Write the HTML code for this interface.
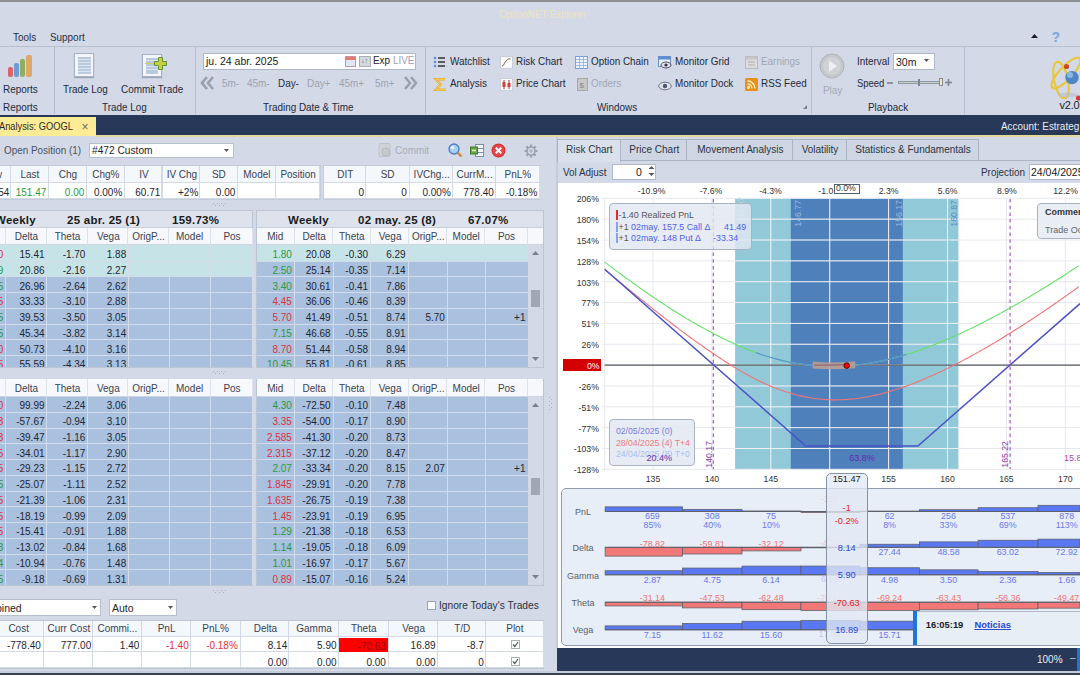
<!DOCTYPE html><html><head><meta charset="utf-8"><style>
*{margin:0;padding:0;box-sizing:border-box}
html,body{width:1080px;height:675px;overflow:hidden;background:#d3d9e7;font-family:"Liberation Sans",sans-serif;font-size:10px;color:#1e2a3a}
.a{position:absolute}
.t{position:absolute;white-space:nowrap;line-height:1}
.g{color:#9aa3b0}
svg{position:absolute;overflow:visible}
.u{font-size:11px;transform:scaleX(0.9);transform-origin:0 0}
.cc{font-size:10.8px;transform:scaleX(0.925);transform-origin:50% 0;text-align:center}
.cr{font-size:10.8px;transform:scaleX(0.925);transform-origin:100% 0;text-align:right}
</style></head><body>
<div class="a" style="left:0px;top:0px;width:1080px;height:1.6px;background:#8e9096"></div>
<div class="a" style="left:0px;top:2px;width:1080px;height:44px;background:#d3d9e7"></div>
<div class="t" style="left:499px;top:8.6px;color:#f0e4bc;font-size:11px;transform:scaleX(0.885);transform-origin:0 0">OptionNET Explorer</div>
<div class="t u" style="left:13px;top:31.6px;color:#27303d">Tools</div>
<div class="t u" style="left:50px;top:31.6px;color:#27303d">Support</div>
<svg style="left:1031px;top:34px" width="8" height="5"><path d="M0 4 L3.5 0 L7 4Z" fill="#1a1f2a"/></svg>
<div class="t" style="left:1051.5px;top:30px;color:#78a8e0;font-weight:bold;font-size:14px">?</div>
<div class="a" style="left:0px;top:45.6px;width:1080px;height:1.7px;background:#b6c0d0"></div>
<div class="a" style="left:54px;top:47px;width:1.3px;height:67px;background:#b3bdd0"></div>
<div class="a" style="left:195px;top:47px;width:1.3px;height:67px;background:#b3bdd0"></div>
<div class="a" style="left:425px;top:47px;width:1.3px;height:67px;background:#b3bdd0"></div>
<div class="a" style="left:811px;top:47px;width:1.3px;height:67px;background:#b3bdd0"></div>
<div class="a" style="left:964px;top:47px;width:1.3px;height:67px;background:#b3bdd0"></div>
<div class="a" style="left:8px;top:67px;width:5px;height:10px;background:#d9646a;border-radius:2px"></div>
<div class="a" style="left:14px;top:63px;width:5px;height:14px;background:#6c9bd6;border-radius:2px"></div>
<div class="a" style="left:20px;top:59px;width:5px;height:18px;background:#8fad64;border-radius:2px"></div>
<div class="a" style="left:26px;top:55px;width:6px;height:22px;background:#e0a862;border-radius:2px"></div>
<div class="t u" style="left:3px;top:83.9px;">Reports</div>
<div class="t u" style="left:3px;top:101.6px;">Reports</div>
<div class="a" style="left:74px;top:53px;width:20px;height:24px;background:#f4f6fa;border:1px solid #a7b4c8;box-shadow:0 1px 1px #9aa6b8"></div>
<div class="a" style="left:78px;top:57px;width:13px;height:17px;background:#b9c9de"></div>
<div class="a" style="left:78px;top:59px;width:13px;height:1px;background:#dde5f0"></div>
<div class="a" style="left:78px;top:62px;width:13px;height:1px;background:#dde5f0"></div>
<div class="a" style="left:78px;top:65px;width:13px;height:1px;background:#dde5f0"></div>
<div class="a" style="left:78px;top:68px;width:13px;height:1px;background:#dde5f0"></div>
<div class="a" style="left:78px;top:71px;width:13px;height:1px;background:#dde5f0"></div>
<div class="a" style="left:142px;top:54px;width:20px;height:23px;background:#f4f6fa;border:1px solid #a7b4c8;box-shadow:0 1px 1px #9aa6b8"></div>
<div class="a" style="left:146px;top:58px;width:12px;height:16px;background:#b9c9de"></div>
<div class="a" style="left:146px;top:60px;width:12px;height:1px;background:#dde5f0"></div>
<div class="a" style="left:146px;top:63px;width:12px;height:1px;background:#dde5f0"></div>
<div class="a" style="left:146px;top:66px;width:12px;height:1px;background:#dde5f0"></div>
<div class="a" style="left:146px;top:69px;width:12px;height:1px;background:#dde5f0"></div>
<div class="a" style="left:145px;top:62.5px;width:12px;height:1.5px;background:#d8c85a"></div>
<svg style="left:154px;top:57px" width="13" height="13"><path d="M4.5 0.5H8.5V4.5H12.5V8.5H8.5V12.5H4.5V8.5H0.5V4.5H4.5Z" fill="#c8d040" stroke="#5a8a30" stroke-width="0.9"/></svg>
<div class="t u" style="left:63px;top:83.9px;">Trade Log</div>
<div class="t u" style="left:121px;top:83.9px;">Commit Trade</div>
<div class="t u" style="left:102px;top:101.6px;">Trade Log</div>
<div class="a" style="left:203px;top:53px;width:213px;height:17px;background:#fff;border:1px solid #aeb8c8"></div>
<div class="t" style="left:206px;top:55.8px;font-size:10.5px;color:#1a1a1a">ju. 24 abr. 2025</div>
<div class="a" style="left:345px;top:56px;width:11px;height:11px;background:linear-gradient(#e87a6a 0 3px,#dfe6f5 3px);border:1px solid #b9a"></div>
<div class="a" style="left:359px;top:56px;width:12px;height:11px;background:#d5d8de;border:1px solid #a9afb9"></div>
<div class="t" style="left:361px;top:57px;font-size:7px;color:#667">&#8595;&#8593;</div>
<div class="t u" style="left:373px;top:54.6px;color:#222">Exp</div>
<div class="t u" style="left:393px;top:54.6px;color:#a39ab8">LIVE</div>
<svg style="left:200px;top:76px" width="16" height="14"><path d="M7 1 L2 7 L7 13 M13 1 L8 7 L13 13" stroke="#9aa1ad" stroke-width="2.6" fill="none"/></svg>
<div class="t u" style="left:222px;top:77.6px;color:#9ba4b1">5m-</div>
<div class="t u" style="left:247px;top:77.6px;color:#9ba4b1">45m-</div>
<div class="t u" style="left:278px;top:77.6px;color:#27303d">Day-</div>
<div class="t u" style="left:307px;top:77.6px;color:#9ba4b1">Day+</div>
<div class="t u" style="left:339px;top:77.6px;color:#9ba4b1">45m+</div>
<div class="t u" style="left:375px;top:77.6px;color:#9ba4b1">5m+</div>
<svg style="left:403px;top:76px" width="16" height="14"><path d="M2 1 L7 7 L2 13 M8 1 L13 7 L8 13" stroke="#9aa1ad" stroke-width="2.6" fill="none"/></svg>
<div class="t u" style="left:263px;top:101.6px;">Trading Date &amp; Time</div>
<svg style="left:433px;top:56px" width="13" height="12"><g fill="#5b8ed6"><circle cx="2" cy="2" r="1.3"/><circle cx="2" cy="6" r="1.3"/><circle cx="2" cy="10" r="1.3"/></g><g stroke="#333" stroke-width="1.4"><path d="M5 2H12M5 6H12M5 10H12"/></g></svg>
<div class="t u" style="left:450px;top:56.1px;">Watchlist</div>
<svg style="left:500px;top:56px" width="13" height="13"><rect x="0.5" y="0.5" width="12" height="12" fill="#f8f9fb" stroke="#c9ced8"/><path d="M2 10 C4 10 4.5 6 6 5 S8 2 10.5 3" stroke="#8a6a3a" fill="none"/></svg>
<div class="t u" style="left:516px;top:56.1px;">Risk Chart</div>
<svg style="left:575px;top:56px" width="13" height="13"><rect x="0.5" y="0.5" width="12" height="12" fill="#eef3fb" stroke="#7aa0d8"/><path d="M0.5 3.5H12.5M0.5 6.5H12.5M0.5 9.5H12.5M4.5 0.5V12.5M8.5 0.5V12.5" stroke="#8ab0e0" stroke-width="0.8"/></svg>
<div class="t u" style="left:591px;top:56.1px;">Option Chain</div>
<svg style="left:658px;top:56px" width="14" height="13"><rect x="0.5" y="0.5" width="12" height="10" fill="#e8eef8" stroke="#6a90c8"/><rect x="0.5" y="0.5" width="12" height="3" fill="#5b8ed6"/><ellipse cx="8" cy="9" rx="5" ry="3" fill="#dde" stroke="#556"/><circle cx="8" cy="9" r="1.6" fill="#334"/></svg>
<div class="t u" style="left:675px;top:56.1px;">Monitor Grid</div>
<svg style="left:745px;top:56px" width="13" height="13"><rect x="0.5" y="0.5" width="12" height="12" fill="#dcdcdc" stroke="#b9b9b9"/><rect x="0.5" y="0.5" width="12" height="3" fill="#c5c5c5"/><path d="M3 6H10M3 9H10" stroke="#b0b0b0"/></svg>
<div class="t u" style="left:761px;top:56.1px;color:#a0a8b4">Earnings</div>
<svg style="left:434px;top:78px" width="13" height="13"><path d="M11 1.2H1.8L6.5 6.5L1.8 11.8H11.5" stroke="#e8a830" stroke-width="2.4" fill="none"/><path d="M11 1.2H1.8L6.5 6.5L1.8 11.8H11.5" stroke="#f8d860" stroke-width="1" fill="none"/></svg>
<div class="t u" style="left:450px;top:78.1px;">Analysis</div>
<svg style="left:500px;top:78px" width="13" height="13"><rect x="0.5" y="0.5" width="12" height="12" fill="#f8f9fb" stroke="#c9ced8"/><path d="M4 2V11M9 2V11" stroke="#c03030"/><rect x="2.5" y="4" width="3" height="5" fill="#d04040"/><rect x="7.5" y="5" width="3" height="4" fill="#d04040"/></svg>
<div class="t u" style="left:516px;top:78.1px;">Price Chart</div>
<svg style="left:576px;top:78px" width="13" height="13"><rect x="1.5" y="0.5" width="10" height="12" fill="#c8c8c8" stroke="#a8a8a8"/><text x="3.5" y="10" font-size="8" fill="#888">$</text></svg>
<div class="t u" style="left:591px;top:78.1px;color:#a0a8b4">Orders</div>
<svg style="left:658px;top:81px" width="14" height="10"><ellipse cx="7" cy="5" rx="6.3" ry="3.8" fill="#e0e4ea" stroke="#6a707c"/><circle cx="7" cy="5" r="2.2" fill="#4a5a74"/></svg>
<div class="t u" style="left:675px;top:78.1px;">Monitor Dock</div>
<svg style="left:745px;top:78px" width="13" height="13"><rect x="0" y="0" width="13" height="13" rx="1.5" fill="#e8901c"/><circle cx="3.5" cy="9.5" r="1.4" fill="#fff3c0"/><path d="M2.5 6A4.5 4.5 0 0 1 7 10.5M2.5 3A7.5 7.5 0 0 1 10 10.5" stroke="#fff3c0" stroke-width="1.3" fill="none"/></svg>
<div class="t u" style="left:761px;top:78.1px;">RSS Feed</div>
<div class="t u" style="left:597px;top:101.6px;">Windows</div>
<svg style="left:803px;top:105px" width="5" height="5"><path d="M4 0V4H0Z" fill="#7a8290"/></svg>
<svg style="left:819px;top:53px" width="26" height="26"><circle cx="13" cy="13" r="12" fill="#c4c7cc" stroke="#b0b3b8"/><circle cx="13" cy="13" r="9" fill="#cfd2d6"/><path d="M10 7.5L18 13L10 18.5Z" fill="#eef0f2"/></svg>
<div class="t u" style="left:823px;top:84.6px;color:#a3aab5">Play</div>
<div class="t u" style="left:857px;top:56.1px;">Interval</div>
<div class="a" style="left:893px;top:53px;width:42px;height:17px;background:#fff;border:1px solid #aeb8c8"></div>
<div class="t" style="left:896px;top:56.7px;font-size:10.5px;color:#1a1a1a">30m</div>
<svg style="left:924px;top:59px" width="6" height="4"><path d="M0 0H5L2.5 3Z" fill="#555"/></svg>
<div class="t" style="left:857px;top:78.1px;font-size:11px;transform:scaleX(0.86);transform-origin:0 0">Speed</div>
<div class="a" style="left:887px;top:82px;width:6px;height:2px;background:#8a96a6"></div>
<div class="a" style="left:898px;top:81px;width:45px;height:3px;background:#c8d2c0;border:1px solid #8c9aa8"></div>
<div class="a" style="left:918px;top:79px;width:2px;height:7px;background:#7a8694"></div>
<div class="a" style="left:939px;top:78px;width:4px;height:8px;background:#f2e6cc;border:1px solid #8a8a8a"></div>
<svg style="left:945px;top:79px" width="7" height="7"><path d="M3.5 0V7M0 3.5H7" stroke="#7a8694" stroke-width="1.6"/></svg>
<div class="t u" style="left:868px;top:101.6px;">Playback</div>
<svg style="left:1040px;top:50px" width="40" height="60"><g fill="none" stroke="#e8c640" stroke-width="2.2"><ellipse cx="21" cy="30" rx="7" ry="18.5" transform="rotate(-12 21 30)"/><ellipse cx="26" cy="23" rx="6.5" ry="20" transform="rotate(43 26 23)"/></g><ellipse cx="28" cy="45" rx="10" ry="2.5" fill="#b8c0cc" opacity="0.6"/><circle cx="32" cy="27.6" r="6.7" fill="#4f86c6"/><circle cx="30" cy="25" r="3" fill="#8ab8e8"/><circle cx="26.5" cy="16.5" r="2.6" fill="#c84a28"/><circle cx="38.5" cy="48" r="2.6" fill="#e03838"/></svg>
<div class="t" style="left:1059.5px;top:99.5px;color:#1a1e28;font-size:11px;letter-spacing:-0.2px">v2.0</div>
<div class="a" style="left:0px;top:115px;width:1080px;height:20px;background:#283858"></div>
<div class="a" style="left:0px;top:117px;width:96px;height:19px;background:#fdeb95"></div>
<div class="t" style="left:-1.5px;top:121.3px;color:#2a2a2a;font-size:11.2px;transform:scaleX(0.83);transform-origin:0 0">Analysis: GOOGL</div>
<div class="t" style="left:81.5px;top:121px;color:#6a6a6a;font-size:12px">&#215;</div>
<div class="t u" style="left:1001px;top:120.6px;color:#e8ecf4">Account: Estrateg</div>
<div class="a" style="left:96px;top:135px;width:984px;height:2px;background:#e2d89a"></div>
<div class="t u" style="left:4px;top:144.6px;color:#4a5262">Open Position (1)</div>
<div class="a" style="left:89px;top:143px;width:145px;height:15px;background:#fff;border:1px solid #b5bfcd"></div>
<div class="t" style="left:92px;top:146px;color:#1e1e1e;font-size:10.2px">#472 Custom</div>
<svg style="left:224px;top:149px" width="6" height="4"><path d="M0 0H5L2.5 3Z" fill="#555"/></svg>
<svg style="left:378px;top:143px" width="14" height="14"><rect x="1" y="0.5" width="11" height="13" rx="1" fill="#cfd3d8" stroke="#c0c4ca"/><circle cx="8" cy="9" r="4" fill="#c6cacf" stroke="#b5b9bf"/></svg>
<div class="t u" style="left:395px;top:144.6px;color:#a6aebb">Commit</div>
<svg style="left:448px;top:143px" width="15" height="15"><circle cx="6" cy="6" r="5" fill="#a9cdf0" stroke="#4a7cc0" stroke-width="1.3"/><circle cx="4.5" cy="4.5" r="1.8" fill="#e6f2fc"/><path d="M9.5 9.5L13.5 13.5" stroke="#c88a3a" stroke-width="2.4"/></svg>
<svg style="left:470px;top:144px" width="14" height="13"><rect x="5.5" y="0.5" width="8" height="12" fill="#f4f7fb" stroke="#7890b0"/><path d="M5.5 4.5H13.5M5.5 8.5H13.5" stroke="#7890b0"/><rect x="0.5" y="3" width="7" height="7" fill="#6aa84a" stroke="#3d7a2a"/><path d="M2 6.5H6" stroke="#e8f0c0" stroke-width="1.5"/></svg>
<svg style="left:491px;top:143px" width="15" height="15"><circle cx="7.5" cy="7.5" r="7" fill="#d93030"/><circle cx="7.5" cy="7.5" r="5.8" fill="#e54848"/><path d="M4.8 4.8L10.2 10.2M10.2 4.8L4.8 10.2" stroke="#fff" stroke-width="2"/></svg>
<svg style="left:524px;top:144px" width="14" height="14"><circle cx="7" cy="7" r="4.8" fill="#9aa2ae"/><g stroke="#9aa2ae" stroke-width="2.2"><path d="M7 0.5V13.5M0.5 7H13.5M2.4 2.4L11.6 11.6M11.6 2.4L2.4 11.6"/></g><circle cx="7" cy="7" r="3.2" fill="#d3d9e7"/><circle cx="7" cy="7" r="1.8" fill="#b0b8c4"/></svg>
<div class="a" style="left:-30px;top:165px;width:351px;height:35px;border:1px solid #c3ccd9"></div>
<div class="a" style="left:-26.5px;top:166px;width:37.8px;height:17.3px;background:#f4f7fc;border-right:1px solid #d3dae6;border-bottom:1px solid #d3dae6"></div>
<div class="a" style="left:11.3px;top:166px;width:37.8px;height:17.3px;background:#f4f7fc;border-right:1px solid #d3dae6;border-bottom:1px solid #d3dae6"></div>
<div class="a" style="left:49.1px;top:166px;width:37.800000000000004px;height:17.3px;background:#f4f7fc;border-right:1px solid #d3dae6;border-bottom:1px solid #d3dae6"></div>
<div class="a" style="left:86.9px;top:166px;width:37.8px;height:17.3px;background:#f4f7fc;border-right:1px solid #d3dae6;border-bottom:1px solid #d3dae6"></div>
<div class="a" style="left:124.7px;top:166px;width:37.8px;height:17.3px;background:#f4f7fc;border-right:1px solid #d3dae6;border-bottom:1px solid #d3dae6"></div>
<div class="a" style="left:162.5px;top:166px;width:37.80000000000001px;height:17.3px;background:#f4f7fc;border-right:1px solid #d3dae6;border-bottom:1px solid #d3dae6"></div>
<div class="a" style="left:200.3px;top:166px;width:37.79999999999998px;height:17.3px;background:#f4f7fc;border-right:1px solid #d3dae6;border-bottom:1px solid #d3dae6"></div>
<div class="a" style="left:238.1px;top:166px;width:37.79999999999998px;height:17.3px;background:#f4f7fc;border-right:1px solid #d3dae6;border-bottom:1px solid #d3dae6"></div>
<div class="a" style="left:275.9px;top:166px;width:44.30000000000001px;height:17.3px;background:#f4f7fc;border-right:1px solid #d3dae6;border-bottom:1px solid #d3dae6"></div>
<div class="t cc" style="left:-26.5px;top:166.0px;width:37.8px;line-height:17.3px;color:#3a4350;">Low</div>
<div class="t cc" style="left:11.3px;top:166.0px;width:37.8px;line-height:17.3px;color:#3a4350;">Last</div>
<div class="t cc" style="left:49.1px;top:166.0px;width:37.8px;line-height:17.3px;color:#3a4350;">Chg</div>
<div class="t cc" style="left:86.9px;top:166.0px;width:37.8px;line-height:17.3px;color:#3a4350;">Chg%</div>
<div class="t cc" style="left:124.7px;top:166.0px;width:37.8px;line-height:17.3px;color:#3a4350;">IV</div>
<div class="t cc" style="left:162.5px;top:166.0px;width:37.8px;line-height:17.3px;color:#3a4350;">IV Chg</div>
<div class="t cc" style="left:200.3px;top:166.0px;width:37.8px;line-height:17.3px;color:#3a4350;">SD</div>
<div class="t cc" style="left:238.1px;top:166.0px;width:37.8px;line-height:17.3px;color:#3a4350;">Model</div>
<div class="t cc" style="left:275.9px;top:166.0px;width:44.3px;line-height:17.3px;color:#3a4350;">Position</div>
<div class="a" style="left:-26.5px;top:183.3px;width:37.8px;height:16.2px;background:#fff;border-right:1px solid #d3dae6;border-bottom:1px solid #d3dae6"></div>
<div class="a" style="left:11.3px;top:183.3px;width:37.8px;height:16.2px;background:#fff;border-right:1px solid #d3dae6;border-bottom:1px solid #d3dae6"></div>
<div class="a" style="left:49.1px;top:183.3px;width:37.800000000000004px;height:16.2px;background:#fff;border-right:1px solid #d3dae6;border-bottom:1px solid #d3dae6"></div>
<div class="a" style="left:86.9px;top:183.3px;width:37.8px;height:16.2px;background:#fff;border-right:1px solid #d3dae6;border-bottom:1px solid #d3dae6"></div>
<div class="a" style="left:124.7px;top:183.3px;width:37.8px;height:16.2px;background:#fff;border-right:1px solid #d3dae6;border-bottom:1px solid #d3dae6"></div>
<div class="a" style="left:162.5px;top:183.3px;width:37.80000000000001px;height:16.2px;background:#fff;border-right:1px solid #d3dae6;border-bottom:1px solid #d3dae6"></div>
<div class="a" style="left:200.3px;top:183.3px;width:37.79999999999998px;height:16.2px;background:#fff;border-right:1px solid #d3dae6;border-bottom:1px solid #d3dae6"></div>
<div class="a" style="left:238.1px;top:183.3px;width:37.79999999999998px;height:16.2px;background:#fff;border-right:1px solid #d3dae6;border-bottom:1px solid #d3dae6"></div>
<div class="a" style="left:275.9px;top:183.3px;width:44.30000000000001px;height:16.2px;background:#fff;border-right:1px solid #d3dae6;border-bottom:1px solid #d3dae6"></div>
<div class="t cr" style="left:-26.5px;top:183.6px;width:35.3px;line-height:16.2px;color:#1e2530;">151.54</div>
<div class="t cr" style="left:11.3px;top:183.6px;width:35.3px;line-height:16.2px;color:#2a9a3a;">151.47</div>
<div class="t cr" style="left:49.1px;top:183.6px;width:35.3px;line-height:16.2px;color:#2a9a3a;">0.00</div>
<div class="t cr" style="left:86.9px;top:183.6px;width:35.3px;line-height:16.2px;color:#1e2530;">0.00%</div>
<div class="t cr" style="left:124.7px;top:183.6px;width:35.3px;line-height:16.2px;color:#1e2530;">60.71</div>
<div class="t cr" style="left:162.5px;top:183.6px;width:35.3px;line-height:16.2px;color:#1e2530;">+2%</div>
<div class="t cr" style="left:200.3px;top:183.6px;width:35.3px;line-height:16.2px;color:#1e2530;">0.00</div>
<div class="a" style="left:323.7px;top:166px;width:42.60000000000002px;height:17.3px;background:#f4f7fc;border-right:1px solid #d3dae6;border-bottom:1px solid #d3dae6"></div>
<div class="a" style="left:366.3px;top:166px;width:43.30000000000001px;height:17.3px;background:#f4f7fc;border-right:1px solid #d3dae6;border-bottom:1px solid #d3dae6"></div>
<div class="a" style="left:409.6px;top:166px;width:43.299999999999955px;height:17.3px;background:#f4f7fc;border-right:1px solid #d3dae6;border-bottom:1px solid #d3dae6"></div>
<div class="a" style="left:452.9px;top:166px;width:43.30000000000001px;height:17.3px;background:#f4f7fc;border-right:1px solid #d3dae6;border-bottom:1px solid #d3dae6"></div>
<div class="a" style="left:496.2px;top:166px;width:43.80000000000001px;height:17.3px;background:#f4f7fc;border-right:1px solid #d3dae6;border-bottom:1px solid #d3dae6"></div>
<div class="t cc" style="left:323.7px;top:166.0px;width:42.6px;line-height:17.3px;color:#3a4350;">DIT</div>
<div class="t cc" style="left:366.3px;top:166.0px;width:43.3px;line-height:17.3px;color:#3a4350;">SD</div>
<div class="t cc" style="left:409.6px;top:166.0px;width:43.3px;line-height:17.3px;color:#3a4350;">IVChg...</div>
<div class="t cc" style="left:452.9px;top:166.0px;width:43.3px;line-height:17.3px;color:#3a4350;">CurrM...</div>
<div class="t cc" style="left:496.2px;top:166.0px;width:43.8px;line-height:17.3px;color:#3a4350;">PnL%</div>
<div class="a" style="left:323.7px;top:183.3px;width:42.60000000000002px;height:16.2px;background:#fff;border-right:1px solid #d3dae6;border-bottom:1px solid #d3dae6"></div>
<div class="a" style="left:366.3px;top:183.3px;width:43.30000000000001px;height:16.2px;background:#fff;border-right:1px solid #d3dae6;border-bottom:1px solid #d3dae6"></div>
<div class="a" style="left:409.6px;top:183.3px;width:43.299999999999955px;height:16.2px;background:#fff;border-right:1px solid #d3dae6;border-bottom:1px solid #d3dae6"></div>
<div class="a" style="left:452.9px;top:183.3px;width:43.30000000000001px;height:16.2px;background:#fff;border-right:1px solid #d3dae6;border-bottom:1px solid #d3dae6"></div>
<div class="a" style="left:496.2px;top:183.3px;width:43.80000000000001px;height:16.2px;background:#fff;border-right:1px solid #d3dae6;border-bottom:1px solid #d3dae6"></div>
<div class="t cr" style="left:323.7px;top:183.6px;width:40.1px;line-height:16.2px;color:#1e2530;">0</div>
<div class="t cr" style="left:366.3px;top:183.6px;width:40.8px;line-height:16.2px;color:#1e2530;">0</div>
<div class="t cr" style="left:409.6px;top:183.6px;width:40.8px;line-height:16.2px;color:#1e2530;">0.00%</div>
<div class="t cr" style="left:452.9px;top:183.6px;width:40.8px;line-height:16.2px;color:#1e2530;">778.40</div>
<div class="t cr" style="left:496.2px;top:183.6px;width:41.3px;line-height:16.2px;color:#1e2530;">-0.18%</div>
<div class="a" style="left:323px;top:165px;width:218px;height:35px;border:1px solid #c3ccd9;border-right:none"></div>
<svg style="left:213px;top:203px" width="14" height="4"><g fill="#a9b1bd"><rect x="0" y="0" width="1" height="1"/><rect x="1" y="2" width="0" height="0"/><rect x="2" y="2" width="1" height="1"/><rect x="3" y="0" width="0" height="0"/><rect x="4" y="0" width="1" height="1"/><rect x="5" y="2" width="0" height="0"/><rect x="6" y="2" width="1" height="1"/><rect x="7" y="0" width="0" height="0"/><rect x="8" y="0" width="1" height="1"/><rect x="9" y="2" width="0" height="0"/><rect x="10" y="2" width="1" height="1"/><rect x="11" y="0" width="0" height="0"/><rect x="12" y="0" width="1" height="1"/><rect x="13" y="2" width="0" height="0"/></g></svg>
<div class="a" style="left:-35px;top:210px;width:287.5px;height:158px;background:#d3d9e7;border:1px solid #bcc5d3"></div>
<div class="a" style="left:-34px;top:211px;width:285.5px;height:17px;background:#dde2ec;border-bottom:1px solid #c9d0dc"></div>
<div class="t" style="left:-5px;top:214.7px;font-weight:bold;font-size:11.5px;color:#1a1a1a;letter-spacing:0.25px">Weekly</div>
<div class="t" style="left:67px;top:214.7px;font-weight:bold;font-size:11.5px;color:#1a1a1a;letter-spacing:0.25px">25 abr. 25 (1)</div>
<div class="t" style="left:172px;top:214.7px;font-weight:bold;font-size:11.5px;color:#1a1a1a;letter-spacing:0.25px">159.73%</div>
<div class="a" style="left:-34px;top:228px;width:285.5px;height:17.2px;background:#f6f8fc;border-bottom:1px solid #ccd4e0"></div>
<div class="a" style="left:4.7px;top:228px;width:1px;height:17.2px;background:#dde3ec"></div>
<div class="t cc" style="left:-35.0px;top:228.0px;width:40.7px;line-height:17.2px;color:#3a4350;">Mid</div>
<div class="a" style="left:45.7px;top:228px;width:1px;height:17.2px;background:#dde3ec"></div>
<div class="t cc" style="left:5.7px;top:228.0px;width:41.0px;line-height:17.2px;color:#3a4350;">Delta</div>
<div class="a" style="left:86.6px;top:228px;width:1px;height:17.2px;background:#dde3ec"></div>
<div class="t cc" style="left:46.7px;top:228.0px;width:40.9px;line-height:17.2px;color:#3a4350;">Theta</div>
<div class="a" style="left:127.30000000000001px;top:228px;width:1px;height:17.2px;background:#dde3ec"></div>
<div class="t cc" style="left:87.6px;top:228.0px;width:40.7px;line-height:17.2px;color:#3a4350;">Vega</div>
<div class="a" style="left:168.3px;top:228px;width:1px;height:17.2px;background:#dde3ec"></div>
<div class="t cc" style="left:128.3px;top:228.0px;width:41.0px;line-height:17.2px;color:#3a4350;">OrigP...</div>
<div class="a" style="left:209.5px;top:228px;width:1px;height:17.2px;background:#dde3ec"></div>
<div class="t cc" style="left:169.3px;top:228.0px;width:41.2px;line-height:17.2px;color:#3a4350;">Model</div>
<div class="a" style="left:251.5px;top:228px;width:1px;height:17.2px;background:#dde3ec"></div>
<div class="t cc" style="left:210.5px;top:228.0px;width:42.0px;line-height:17.2px;color:#3a4350;">Pos</div>
<div class="a" style="left:-34px;top:245.2px;width:286.5px;height:15.75px;background:#c6e4e8"></div>
<div class="a" style="left:-34px;top:260.95px;width:286.5px;height:15.75px;background:#c6e4e8"></div>
<div class="a" style="left:-34px;top:276.7px;width:286.5px;height:15.75px;background:#a9c0df"></div>
<div class="a" style="left:-34px;top:292.45px;width:286.5px;height:15.75px;background:#a9c0df"></div>
<div class="a" style="left:-34px;top:308.2px;width:286.5px;height:15.75px;background:#a9c0df"></div>
<div class="a" style="left:-34px;top:323.95px;width:286.5px;height:15.75px;background:#a9c0df"></div>
<div class="a" style="left:-34px;top:339.7px;width:286.5px;height:15.75px;background:#a9c0df"></div>
<div class="a" style="left:-34px;top:355.45px;width:286.5px;height:11.550000000000011px;background:#a9c0df"></div>
<div class="a" style="left:-34px;top:260.55px;width:286.5px;height:1px;background:#d3dce8"></div>
<div class="a" style="left:5.3px;top:245.2px;width:1px;height:15.75px;background:#d3dce8"></div>
<div class="a" style="left:46.300000000000004px;top:245.2px;width:1px;height:15.75px;background:#d3dce8"></div>
<div class="a" style="left:87.19999999999999px;top:245.2px;width:1px;height:15.75px;background:#d3dce8"></div>
<div class="a" style="left:127.9px;top:245.2px;width:1px;height:15.75px;background:#d3dce8"></div>
<div class="a" style="left:168.9px;top:245.2px;width:1px;height:15.75px;background:#d3dce8"></div>
<div class="a" style="left:210.1px;top:245.2px;width:1px;height:15.75px;background:#d3dce8"></div>
<div class="a" style="left:252.1px;top:245.2px;width:1px;height:15.75px;background:#d3dce8"></div>
<div class="a" style="left:-34px;top:276.3px;width:286.5px;height:1px;background:#d3dce8"></div>
<div class="a" style="left:5.3px;top:260.95px;width:1px;height:15.75px;background:#d3dce8"></div>
<div class="a" style="left:46.300000000000004px;top:260.95px;width:1px;height:15.75px;background:#d3dce8"></div>
<div class="a" style="left:87.19999999999999px;top:260.95px;width:1px;height:15.75px;background:#d3dce8"></div>
<div class="a" style="left:127.9px;top:260.95px;width:1px;height:15.75px;background:#d3dce8"></div>
<div class="a" style="left:168.9px;top:260.95px;width:1px;height:15.75px;background:#d3dce8"></div>
<div class="a" style="left:210.1px;top:260.95px;width:1px;height:15.75px;background:#d3dce8"></div>
<div class="a" style="left:252.1px;top:260.95px;width:1px;height:15.75px;background:#d3dce8"></div>
<div class="a" style="left:-34px;top:292.05px;width:286.5px;height:1px;background:#d3dce8"></div>
<div class="a" style="left:5.3px;top:276.7px;width:1px;height:15.75px;background:#d3dce8"></div>
<div class="a" style="left:46.300000000000004px;top:276.7px;width:1px;height:15.75px;background:#d3dce8"></div>
<div class="a" style="left:87.19999999999999px;top:276.7px;width:1px;height:15.75px;background:#d3dce8"></div>
<div class="a" style="left:127.9px;top:276.7px;width:1px;height:15.75px;background:#d3dce8"></div>
<div class="a" style="left:168.9px;top:276.7px;width:1px;height:15.75px;background:#d3dce8"></div>
<div class="a" style="left:210.1px;top:276.7px;width:1px;height:15.75px;background:#d3dce8"></div>
<div class="a" style="left:252.1px;top:276.7px;width:1px;height:15.75px;background:#d3dce8"></div>
<div class="a" style="left:-34px;top:307.8px;width:286.5px;height:1px;background:#d3dce8"></div>
<div class="a" style="left:5.3px;top:292.45px;width:1px;height:15.75px;background:#d3dce8"></div>
<div class="a" style="left:46.300000000000004px;top:292.45px;width:1px;height:15.75px;background:#d3dce8"></div>
<div class="a" style="left:87.19999999999999px;top:292.45px;width:1px;height:15.75px;background:#d3dce8"></div>
<div class="a" style="left:127.9px;top:292.45px;width:1px;height:15.75px;background:#d3dce8"></div>
<div class="a" style="left:168.9px;top:292.45px;width:1px;height:15.75px;background:#d3dce8"></div>
<div class="a" style="left:210.1px;top:292.45px;width:1px;height:15.75px;background:#d3dce8"></div>
<div class="a" style="left:252.1px;top:292.45px;width:1px;height:15.75px;background:#d3dce8"></div>
<div class="a" style="left:-34px;top:323.55px;width:286.5px;height:1px;background:#d3dce8"></div>
<div class="a" style="left:5.3px;top:308.2px;width:1px;height:15.75px;background:#d3dce8"></div>
<div class="a" style="left:46.300000000000004px;top:308.2px;width:1px;height:15.75px;background:#d3dce8"></div>
<div class="a" style="left:87.19999999999999px;top:308.2px;width:1px;height:15.75px;background:#d3dce8"></div>
<div class="a" style="left:127.9px;top:308.2px;width:1px;height:15.75px;background:#d3dce8"></div>
<div class="a" style="left:168.9px;top:308.2px;width:1px;height:15.75px;background:#d3dce8"></div>
<div class="a" style="left:210.1px;top:308.2px;width:1px;height:15.75px;background:#d3dce8"></div>
<div class="a" style="left:252.1px;top:308.2px;width:1px;height:15.75px;background:#d3dce8"></div>
<div class="a" style="left:-34px;top:339.3px;width:286.5px;height:1px;background:#d3dce8"></div>
<div class="a" style="left:5.3px;top:323.95px;width:1px;height:15.75px;background:#d3dce8"></div>
<div class="a" style="left:46.300000000000004px;top:323.95px;width:1px;height:15.75px;background:#d3dce8"></div>
<div class="a" style="left:87.19999999999999px;top:323.95px;width:1px;height:15.75px;background:#d3dce8"></div>
<div class="a" style="left:127.9px;top:323.95px;width:1px;height:15.75px;background:#d3dce8"></div>
<div class="a" style="left:168.9px;top:323.95px;width:1px;height:15.75px;background:#d3dce8"></div>
<div class="a" style="left:210.1px;top:323.95px;width:1px;height:15.75px;background:#d3dce8"></div>
<div class="a" style="left:252.1px;top:323.95px;width:1px;height:15.75px;background:#d3dce8"></div>
<div class="a" style="left:-34px;top:355.05px;width:286.5px;height:1px;background:#d3dce8"></div>
<div class="a" style="left:5.3px;top:339.7px;width:1px;height:15.75px;background:#d3dce8"></div>
<div class="a" style="left:46.300000000000004px;top:339.7px;width:1px;height:15.75px;background:#d3dce8"></div>
<div class="a" style="left:87.19999999999999px;top:339.7px;width:1px;height:15.75px;background:#d3dce8"></div>
<div class="a" style="left:127.9px;top:339.7px;width:1px;height:15.75px;background:#d3dce8"></div>
<div class="a" style="left:168.9px;top:339.7px;width:1px;height:15.75px;background:#d3dce8"></div>
<div class="a" style="left:210.1px;top:339.7px;width:1px;height:15.75px;background:#d3dce8"></div>
<div class="a" style="left:252.1px;top:339.7px;width:1px;height:15.75px;background:#d3dce8"></div>
<div class="a" style="left:5.3px;top:355.45px;width:1px;height:11.550000000000011px;background:#d3dce8"></div>
<div class="a" style="left:46.300000000000004px;top:355.45px;width:1px;height:11.550000000000011px;background:#d3dce8"></div>
<div class="a" style="left:87.19999999999999px;top:355.45px;width:1px;height:11.550000000000011px;background:#d3dce8"></div>
<div class="a" style="left:127.9px;top:355.45px;width:1px;height:11.550000000000011px;background:#d3dce8"></div>
<div class="a" style="left:168.9px;top:355.45px;width:1px;height:11.550000000000011px;background:#d3dce8"></div>
<div class="a" style="left:210.1px;top:355.45px;width:1px;height:11.550000000000011px;background:#d3dce8"></div>
<div class="a" style="left:252.1px;top:355.45px;width:1px;height:11.550000000000011px;background:#d3dce8"></div>
<div class="a" style="left:-35px;top:245.2px;width:287.5px;height:121.80000000000001px;overflow:hidden">
<div class="t cr" style="left:0.0px;top:1.9px;width:38.2px;line-height:15.75px;color:#e0303a;">1.0</div>
<div class="t cr" style="left:40.7px;top:1.9px;width:38.5px;line-height:15.75px;color:#1e2530;">15.41</div>
<div class="t cr" style="left:81.7px;top:1.9px;width:38.4px;line-height:15.75px;color:#1e2530;">-1.70</div>
<div class="t cr" style="left:122.6px;top:1.9px;width:38.2px;line-height:15.75px;color:#1e2530;">1.88</div>
<div class="t cr" style="left:0.0px;top:17.6px;width:38.2px;line-height:15.75px;color:#2a9a3a;">1.9</div>
<div class="t cr" style="left:40.7px;top:17.6px;width:38.5px;line-height:15.75px;color:#1e2530;">20.86</div>
<div class="t cr" style="left:81.7px;top:17.6px;width:38.4px;line-height:15.75px;color:#1e2530;">-2.16</div>
<div class="t cr" style="left:122.6px;top:17.6px;width:38.2px;line-height:15.75px;color:#1e2530;">2.27</div>
<div class="t cr" style="left:0.0px;top:33.4px;width:38.2px;line-height:15.75px;color:#2a9a3a;">1.5</div>
<div class="t cr" style="left:40.7px;top:33.4px;width:38.5px;line-height:15.75px;color:#1e2530;">26.96</div>
<div class="t cr" style="left:81.7px;top:33.4px;width:38.4px;line-height:15.75px;color:#1e2530;">-2.64</div>
<div class="t cr" style="left:122.6px;top:33.4px;width:38.2px;line-height:15.75px;color:#1e2530;">2.62</div>
<div class="t cr" style="left:0.0px;top:49.1px;width:38.2px;line-height:15.75px;color:#e0303a;">1.5</div>
<div class="t cr" style="left:40.7px;top:49.1px;width:38.5px;line-height:15.75px;color:#1e2530;">33.33</div>
<div class="t cr" style="left:81.7px;top:49.1px;width:38.4px;line-height:15.75px;color:#1e2530;">-3.10</div>
<div class="t cr" style="left:122.6px;top:49.1px;width:38.2px;line-height:15.75px;color:#1e2530;">2.88</div>
<div class="t cr" style="left:0.0px;top:64.9px;width:38.2px;line-height:15.75px;color:#2a9a3a;">1.5</div>
<div class="t cr" style="left:40.7px;top:64.9px;width:38.5px;line-height:15.75px;color:#1e2530;">39.53</div>
<div class="t cr" style="left:81.7px;top:64.9px;width:38.4px;line-height:15.75px;color:#1e2530;">-3.50</div>
<div class="t cr" style="left:122.6px;top:64.9px;width:38.2px;line-height:15.75px;color:#1e2530;">3.05</div>
<div class="t cr" style="left:0.0px;top:80.7px;width:38.2px;line-height:15.75px;color:#2a9a3a;">1.5</div>
<div class="t cr" style="left:40.7px;top:80.7px;width:38.5px;line-height:15.75px;color:#1e2530;">45.34</div>
<div class="t cr" style="left:81.7px;top:80.7px;width:38.4px;line-height:15.75px;color:#1e2530;">-3.82</div>
<div class="t cr" style="left:122.6px;top:80.7px;width:38.2px;line-height:15.75px;color:#1e2530;">3.14</div>
<div class="t cr" style="left:0.0px;top:96.4px;width:38.2px;line-height:15.75px;color:#e0303a;">1.0</div>
<div class="t cr" style="left:40.7px;top:96.4px;width:38.5px;line-height:15.75px;color:#1e2530;">50.73</div>
<div class="t cr" style="left:81.7px;top:96.4px;width:38.4px;line-height:15.75px;color:#1e2530;">-4.10</div>
<div class="t cr" style="left:122.6px;top:96.4px;width:38.2px;line-height:15.75px;color:#1e2530;">3.16</div>
<div class="t cr" style="left:0.0px;top:112.2px;width:38.2px;line-height:15.75px;color:#e0303a;">1.5</div>
<div class="t cr" style="left:40.7px;top:112.2px;width:38.5px;line-height:15.75px;color:#1e2530;">55.59</div>
<div class="t cr" style="left:81.7px;top:112.2px;width:38.4px;line-height:15.75px;color:#1e2530;">-4.34</div>
<div class="t cr" style="left:122.6px;top:112.2px;width:38.2px;line-height:15.75px;color:#1e2530;">3.13</div>
</div>
<div class="a" style="left:256.3px;top:210px;width:287.7px;height:158px;background:#d3d9e7;border:1px solid #bcc5d3"></div>
<div class="a" style="left:257.3px;top:211px;width:285.7px;height:17px;background:#dde2ec;border-bottom:1px solid #c9d0dc"></div>
<div class="t" style="left:288px;top:214.7px;font-weight:bold;font-size:11.5px;color:#1a1a1a;letter-spacing:0.25px">Weekly</div>
<div class="t" style="left:358px;top:214.7px;font-weight:bold;font-size:11.5px;color:#1a1a1a;letter-spacing:0.25px">02 may. 25 (8)</div>
<div class="t" style="left:468px;top:214.7px;font-weight:bold;font-size:11.5px;color:#1a1a1a;letter-spacing:0.25px">67.07%</div>
<div class="a" style="left:257.3px;top:228px;width:285.7px;height:17.2px;background:#f6f8fc;border-bottom:1px solid #ccd4e0"></div>
<div class="a" style="left:293.7px;top:228px;width:1px;height:17.2px;background:#dde3ec"></div>
<div class="t cc" style="left:256.3px;top:228.0px;width:38.4px;line-height:17.2px;color:#3a4350;">Mid</div>
<div class="a" style="left:331.9px;top:228px;width:1px;height:17.2px;background:#dde3ec"></div>
<div class="t cc" style="left:294.7px;top:228.0px;width:38.2px;line-height:17.2px;color:#3a4350;">Delta</div>
<div class="a" style="left:369.5px;top:228px;width:1px;height:17.2px;background:#dde3ec"></div>
<div class="t cc" style="left:332.9px;top:228.0px;width:37.6px;line-height:17.2px;color:#3a4350;">Theta</div>
<div class="a" style="left:407.6px;top:228px;width:1px;height:17.2px;background:#dde3ec"></div>
<div class="t cc" style="left:370.5px;top:228.0px;width:38.1px;line-height:17.2px;color:#3a4350;">Vega</div>
<div class="a" style="left:446px;top:228px;width:1px;height:17.2px;background:#dde3ec"></div>
<div class="t cc" style="left:408.6px;top:228.0px;width:38.4px;line-height:17.2px;color:#3a4350;">OrigP...</div>
<div class="a" style="left:484.4px;top:228px;width:1px;height:17.2px;background:#dde3ec"></div>
<div class="t cc" style="left:447.0px;top:228.0px;width:38.4px;line-height:17.2px;color:#3a4350;">Model</div>
<div class="a" style="left:527.4px;top:228px;width:1px;height:17.2px;background:#dde3ec"></div>
<div class="t cc" style="left:485.4px;top:228.0px;width:43.0px;line-height:17.2px;color:#3a4350;">Pos</div>
<div class="a" style="left:257.3px;top:245.2px;width:271.09999999999997px;height:15.75px;background:#c6e4e8"></div>
<div class="a" style="left:257.3px;top:260.95px;width:271.09999999999997px;height:15.75px;background:#a9c0df"></div>
<div class="a" style="left:257.3px;top:276.7px;width:271.09999999999997px;height:15.75px;background:#a9c0df"></div>
<div class="a" style="left:257.3px;top:292.45px;width:271.09999999999997px;height:15.75px;background:#a9c0df"></div>
<div class="a" style="left:257.3px;top:308.2px;width:271.09999999999997px;height:15.75px;background:#a9c0df"></div>
<div class="a" style="left:257.3px;top:323.95px;width:271.09999999999997px;height:15.75px;background:#a9c0df"></div>
<div class="a" style="left:257.3px;top:339.7px;width:271.09999999999997px;height:15.75px;background:#a9c0df"></div>
<div class="a" style="left:257.3px;top:355.45px;width:271.09999999999997px;height:11.550000000000011px;background:#a9c0df"></div>
<div class="a" style="left:257.3px;top:260.55px;width:271.09999999999997px;height:1px;background:#d3dce8"></div>
<div class="a" style="left:294.3px;top:245.2px;width:1px;height:15.75px;background:#d3dce8"></div>
<div class="a" style="left:332.5px;top:245.2px;width:1px;height:15.75px;background:#d3dce8"></div>
<div class="a" style="left:370.1px;top:245.2px;width:1px;height:15.75px;background:#d3dce8"></div>
<div class="a" style="left:408.20000000000005px;top:245.2px;width:1px;height:15.75px;background:#d3dce8"></div>
<div class="a" style="left:446.6px;top:245.2px;width:1px;height:15.75px;background:#d3dce8"></div>
<div class="a" style="left:485.0px;top:245.2px;width:1px;height:15.75px;background:#d3dce8"></div>
<div class="a" style="left:528.0px;top:245.2px;width:1px;height:15.75px;background:#d3dce8"></div>
<div class="a" style="left:257.3px;top:276.3px;width:271.09999999999997px;height:1px;background:#d3dce8"></div>
<div class="a" style="left:294.3px;top:260.95px;width:1px;height:15.75px;background:#d3dce8"></div>
<div class="a" style="left:332.5px;top:260.95px;width:1px;height:15.75px;background:#d3dce8"></div>
<div class="a" style="left:370.1px;top:260.95px;width:1px;height:15.75px;background:#d3dce8"></div>
<div class="a" style="left:408.20000000000005px;top:260.95px;width:1px;height:15.75px;background:#d3dce8"></div>
<div class="a" style="left:446.6px;top:260.95px;width:1px;height:15.75px;background:#d3dce8"></div>
<div class="a" style="left:485.0px;top:260.95px;width:1px;height:15.75px;background:#d3dce8"></div>
<div class="a" style="left:528.0px;top:260.95px;width:1px;height:15.75px;background:#d3dce8"></div>
<div class="a" style="left:257.3px;top:292.05px;width:271.09999999999997px;height:1px;background:#d3dce8"></div>
<div class="a" style="left:294.3px;top:276.7px;width:1px;height:15.75px;background:#d3dce8"></div>
<div class="a" style="left:332.5px;top:276.7px;width:1px;height:15.75px;background:#d3dce8"></div>
<div class="a" style="left:370.1px;top:276.7px;width:1px;height:15.75px;background:#d3dce8"></div>
<div class="a" style="left:408.20000000000005px;top:276.7px;width:1px;height:15.75px;background:#d3dce8"></div>
<div class="a" style="left:446.6px;top:276.7px;width:1px;height:15.75px;background:#d3dce8"></div>
<div class="a" style="left:485.0px;top:276.7px;width:1px;height:15.75px;background:#d3dce8"></div>
<div class="a" style="left:528.0px;top:276.7px;width:1px;height:15.75px;background:#d3dce8"></div>
<div class="a" style="left:257.3px;top:307.8px;width:271.09999999999997px;height:1px;background:#d3dce8"></div>
<div class="a" style="left:294.3px;top:292.45px;width:1px;height:15.75px;background:#d3dce8"></div>
<div class="a" style="left:332.5px;top:292.45px;width:1px;height:15.75px;background:#d3dce8"></div>
<div class="a" style="left:370.1px;top:292.45px;width:1px;height:15.75px;background:#d3dce8"></div>
<div class="a" style="left:408.20000000000005px;top:292.45px;width:1px;height:15.75px;background:#d3dce8"></div>
<div class="a" style="left:446.6px;top:292.45px;width:1px;height:15.75px;background:#d3dce8"></div>
<div class="a" style="left:485.0px;top:292.45px;width:1px;height:15.75px;background:#d3dce8"></div>
<div class="a" style="left:528.0px;top:292.45px;width:1px;height:15.75px;background:#d3dce8"></div>
<div class="a" style="left:257.3px;top:323.55px;width:271.09999999999997px;height:1px;background:#d3dce8"></div>
<div class="a" style="left:294.3px;top:308.2px;width:1px;height:15.75px;background:#d3dce8"></div>
<div class="a" style="left:332.5px;top:308.2px;width:1px;height:15.75px;background:#d3dce8"></div>
<div class="a" style="left:370.1px;top:308.2px;width:1px;height:15.75px;background:#d3dce8"></div>
<div class="a" style="left:408.20000000000005px;top:308.2px;width:1px;height:15.75px;background:#d3dce8"></div>
<div class="a" style="left:446.6px;top:308.2px;width:1px;height:15.75px;background:#d3dce8"></div>
<div class="a" style="left:485.0px;top:308.2px;width:1px;height:15.75px;background:#d3dce8"></div>
<div class="a" style="left:528.0px;top:308.2px;width:1px;height:15.75px;background:#d3dce8"></div>
<div class="a" style="left:257.3px;top:339.3px;width:271.09999999999997px;height:1px;background:#d3dce8"></div>
<div class="a" style="left:294.3px;top:323.95px;width:1px;height:15.75px;background:#d3dce8"></div>
<div class="a" style="left:332.5px;top:323.95px;width:1px;height:15.75px;background:#d3dce8"></div>
<div class="a" style="left:370.1px;top:323.95px;width:1px;height:15.75px;background:#d3dce8"></div>
<div class="a" style="left:408.20000000000005px;top:323.95px;width:1px;height:15.75px;background:#d3dce8"></div>
<div class="a" style="left:446.6px;top:323.95px;width:1px;height:15.75px;background:#d3dce8"></div>
<div class="a" style="left:485.0px;top:323.95px;width:1px;height:15.75px;background:#d3dce8"></div>
<div class="a" style="left:528.0px;top:323.95px;width:1px;height:15.75px;background:#d3dce8"></div>
<div class="a" style="left:257.3px;top:355.05px;width:271.09999999999997px;height:1px;background:#d3dce8"></div>
<div class="a" style="left:294.3px;top:339.7px;width:1px;height:15.75px;background:#d3dce8"></div>
<div class="a" style="left:332.5px;top:339.7px;width:1px;height:15.75px;background:#d3dce8"></div>
<div class="a" style="left:370.1px;top:339.7px;width:1px;height:15.75px;background:#d3dce8"></div>
<div class="a" style="left:408.20000000000005px;top:339.7px;width:1px;height:15.75px;background:#d3dce8"></div>
<div class="a" style="left:446.6px;top:339.7px;width:1px;height:15.75px;background:#d3dce8"></div>
<div class="a" style="left:485.0px;top:339.7px;width:1px;height:15.75px;background:#d3dce8"></div>
<div class="a" style="left:528.0px;top:339.7px;width:1px;height:15.75px;background:#d3dce8"></div>
<div class="a" style="left:294.3px;top:355.45px;width:1px;height:11.550000000000011px;background:#d3dce8"></div>
<div class="a" style="left:332.5px;top:355.45px;width:1px;height:11.550000000000011px;background:#d3dce8"></div>
<div class="a" style="left:370.1px;top:355.45px;width:1px;height:11.550000000000011px;background:#d3dce8"></div>
<div class="a" style="left:408.20000000000005px;top:355.45px;width:1px;height:11.550000000000011px;background:#d3dce8"></div>
<div class="a" style="left:446.6px;top:355.45px;width:1px;height:11.550000000000011px;background:#d3dce8"></div>
<div class="a" style="left:485.0px;top:355.45px;width:1px;height:11.550000000000011px;background:#d3dce8"></div>
<div class="a" style="left:528.0px;top:355.45px;width:1px;height:11.550000000000011px;background:#d3dce8"></div>
<div class="a" style="left:256.3px;top:245.2px;width:287.7px;height:121.80000000000001px;overflow:hidden">
<div class="t cr" style="left:0.0px;top:1.9px;width:35.9px;line-height:15.75px;color:#2a9a3a;">1.80</div>
<div class="t cr" style="left:38.4px;top:1.9px;width:35.7px;line-height:15.75px;color:#1e2530;">20.08</div>
<div class="t cr" style="left:76.6px;top:1.9px;width:35.1px;line-height:15.75px;color:#1e2530;">-0.30</div>
<div class="t cr" style="left:114.2px;top:1.9px;width:35.6px;line-height:15.75px;color:#1e2530;">6.29</div>
<div class="t cr" style="left:0.0px;top:17.6px;width:35.9px;line-height:15.75px;color:#2a9a3a;">2.50</div>
<div class="t cr" style="left:38.4px;top:17.6px;width:35.7px;line-height:15.75px;color:#1e2530;">25.14</div>
<div class="t cr" style="left:76.6px;top:17.6px;width:35.1px;line-height:15.75px;color:#1e2530;">-0.35</div>
<div class="t cr" style="left:114.2px;top:17.6px;width:35.6px;line-height:15.75px;color:#1e2530;">7.14</div>
<div class="t cr" style="left:0.0px;top:33.4px;width:35.9px;line-height:15.75px;color:#2a9a3a;">3.40</div>
<div class="t cr" style="left:38.4px;top:33.4px;width:35.7px;line-height:15.75px;color:#1e2530;">30.61</div>
<div class="t cr" style="left:76.6px;top:33.4px;width:35.1px;line-height:15.75px;color:#1e2530;">-0.41</div>
<div class="t cr" style="left:114.2px;top:33.4px;width:35.6px;line-height:15.75px;color:#1e2530;">7.86</div>
<div class="t cr" style="left:0.0px;top:49.1px;width:35.9px;line-height:15.75px;color:#e0303a;">4.45</div>
<div class="t cr" style="left:38.4px;top:49.1px;width:35.7px;line-height:15.75px;color:#1e2530;">36.06</div>
<div class="t cr" style="left:76.6px;top:49.1px;width:35.1px;line-height:15.75px;color:#1e2530;">-0.46</div>
<div class="t cr" style="left:114.2px;top:49.1px;width:35.6px;line-height:15.75px;color:#1e2530;">8.39</div>
<div class="t cr" style="left:0.0px;top:64.9px;width:35.9px;line-height:15.75px;color:#e0303a;">5.70</div>
<div class="t cr" style="left:38.4px;top:64.9px;width:35.7px;line-height:15.75px;color:#1e2530;">41.49</div>
<div class="t cr" style="left:76.6px;top:64.9px;width:35.1px;line-height:15.75px;color:#1e2530;">-0.51</div>
<div class="t cr" style="left:114.2px;top:64.9px;width:35.6px;line-height:15.75px;color:#1e2530;">8.74</div>
<div class="t cr" style="left:152.3px;top:64.9px;width:35.9px;line-height:15.75px;color:#1e2530;">5.70</div>
<div class="t cr" style="left:229.1px;top:64.9px;width:40.5px;line-height:15.75px;color:#1e2530;">+1</div>
<div class="t cr" style="left:0.0px;top:80.7px;width:35.9px;line-height:15.75px;color:#2a9a3a;">7.15</div>
<div class="t cr" style="left:38.4px;top:80.7px;width:35.7px;line-height:15.75px;color:#1e2530;">46.68</div>
<div class="t cr" style="left:76.6px;top:80.7px;width:35.1px;line-height:15.75px;color:#1e2530;">-0.55</div>
<div class="t cr" style="left:114.2px;top:80.7px;width:35.6px;line-height:15.75px;color:#1e2530;">8.91</div>
<div class="t cr" style="left:0.0px;top:96.4px;width:35.9px;line-height:15.75px;color:#e0303a;">8.70</div>
<div class="t cr" style="left:38.4px;top:96.4px;width:35.7px;line-height:15.75px;color:#1e2530;">51.44</div>
<div class="t cr" style="left:76.6px;top:96.4px;width:35.1px;line-height:15.75px;color:#1e2530;">-0.58</div>
<div class="t cr" style="left:114.2px;top:96.4px;width:35.6px;line-height:15.75px;color:#1e2530;">8.94</div>
<div class="t cr" style="left:0.0px;top:112.2px;width:35.9px;line-height:15.75px;color:#2a9a3a;">10.45</div>
<div class="t cr" style="left:38.4px;top:112.2px;width:35.7px;line-height:15.75px;color:#1e2530;">55.81</div>
<div class="t cr" style="left:76.6px;top:112.2px;width:35.1px;line-height:15.75px;color:#1e2530;">-0.61</div>
<div class="t cr" style="left:114.2px;top:112.2px;width:35.6px;line-height:15.75px;color:#1e2530;">8.85</div>
</div>
<div class="a" style="left:528.4px;top:229px;width:14.600000000000023px;height:138px;background:#d3d9e7"></div>
<div class="a" style="left:528.4px;top:229px;width:14.600000000000023px;height:16.2px;background:#f6f8fc;border-bottom:1px solid #ccd4e0"></div>
<svg style="left:532.4px;top:251.2px" width="7" height="4"><path d="M0 4L3.5 0L7 4Z" fill="#7a8290"/></svg>
<svg style="left:532.4px;top:357px" width="7" height="4"><path d="M0 0L3.5 4L7 0Z" fill="#7a8290"/></svg>
<div class="a" style="left:531.4px;top:290px;width:9px;height:17px;background:#a0a8b4"></div>
<svg style="left:213px;top:371px" width="14" height="4"><g fill="#a9b1bd"><rect x="0" y="0" width="1" height="1"/><rect x="1" y="2" width="0" height="0"/><rect x="2" y="2" width="1" height="1"/><rect x="3" y="0" width="0" height="0"/><rect x="4" y="0" width="1" height="1"/><rect x="5" y="2" width="0" height="0"/><rect x="6" y="2" width="1" height="1"/><rect x="7" y="0" width="0" height="0"/><rect x="8" y="0" width="1" height="1"/><rect x="9" y="2" width="0" height="0"/><rect x="10" y="2" width="1" height="1"/><rect x="11" y="0" width="0" height="0"/><rect x="12" y="0" width="1" height="1"/><rect x="13" y="2" width="0" height="0"/></g></svg>
<div class="a" style="left:-35px;top:378.5px;width:287.5px;height:207.5px;background:#d3d9e7;border:1px solid #bcc5d3"></div>
<div class="a" style="left:-34px;top:378.5px;width:285.5px;height:18.1px;background:#f6f8fc;border-bottom:1px solid #ccd4e0"></div>
<div class="a" style="left:4.7px;top:378.5px;width:1px;height:18.1px;background:#dde3ec"></div>
<div class="t cc" style="left:-35.0px;top:378.5px;width:40.7px;line-height:18.1px;color:#3a4350;">Mid</div>
<div class="a" style="left:45.7px;top:378.5px;width:1px;height:18.1px;background:#dde3ec"></div>
<div class="t cc" style="left:5.7px;top:378.5px;width:41.0px;line-height:18.1px;color:#3a4350;">Delta</div>
<div class="a" style="left:86.6px;top:378.5px;width:1px;height:18.1px;background:#dde3ec"></div>
<div class="t cc" style="left:46.7px;top:378.5px;width:40.9px;line-height:18.1px;color:#3a4350;">Theta</div>
<div class="a" style="left:127.30000000000001px;top:378.5px;width:1px;height:18.1px;background:#dde3ec"></div>
<div class="t cc" style="left:87.6px;top:378.5px;width:40.7px;line-height:18.1px;color:#3a4350;">Vega</div>
<div class="a" style="left:168.3px;top:378.5px;width:1px;height:18.1px;background:#dde3ec"></div>
<div class="t cc" style="left:128.3px;top:378.5px;width:41.0px;line-height:18.1px;color:#3a4350;">OrigP...</div>
<div class="a" style="left:209.5px;top:378.5px;width:1px;height:18.1px;background:#dde3ec"></div>
<div class="t cc" style="left:169.3px;top:378.5px;width:41.2px;line-height:18.1px;color:#3a4350;">Model</div>
<div class="a" style="left:251.5px;top:378.5px;width:1px;height:18.1px;background:#dde3ec"></div>
<div class="t cc" style="left:210.5px;top:378.5px;width:42.0px;line-height:18.1px;color:#3a4350;">Pos</div>
<div class="a" style="left:-34px;top:396.6px;width:286.5px;height:15.75px;background:#a9c0df"></div>
<div class="a" style="left:-34px;top:412.35px;width:286.5px;height:15.75px;background:#a9c0df"></div>
<div class="a" style="left:-34px;top:428.1px;width:286.5px;height:15.75px;background:#a9c0df"></div>
<div class="a" style="left:-34px;top:443.85px;width:286.5px;height:15.75px;background:#a9c0df"></div>
<div class="a" style="left:-34px;top:459.6px;width:286.5px;height:15.75px;background:#a9c0df"></div>
<div class="a" style="left:-34px;top:475.35px;width:286.5px;height:15.75px;background:#a9c0df"></div>
<div class="a" style="left:-34px;top:491.1px;width:286.5px;height:15.75px;background:#a9c0df"></div>
<div class="a" style="left:-34px;top:506.85px;width:286.5px;height:15.75px;background:#a9c0df"></div>
<div class="a" style="left:-34px;top:522.6px;width:286.5px;height:15.75px;background:#a9c0df"></div>
<div class="a" style="left:-34px;top:538.35px;width:286.5px;height:15.75px;background:#a9c0df"></div>
<div class="a" style="left:-34px;top:554.1px;width:286.5px;height:15.75px;background:#a9c0df"></div>
<div class="a" style="left:-34px;top:569.85px;width:286.5px;height:15.149999999999977px;background:#a9c0df"></div>
<div class="a" style="left:-34px;top:411.95000000000005px;width:286.5px;height:1px;background:#d3dce8"></div>
<div class="a" style="left:5.3px;top:396.6px;width:1px;height:15.75px;background:#d3dce8"></div>
<div class="a" style="left:46.300000000000004px;top:396.6px;width:1px;height:15.75px;background:#d3dce8"></div>
<div class="a" style="left:87.19999999999999px;top:396.6px;width:1px;height:15.75px;background:#d3dce8"></div>
<div class="a" style="left:127.9px;top:396.6px;width:1px;height:15.75px;background:#d3dce8"></div>
<div class="a" style="left:168.9px;top:396.6px;width:1px;height:15.75px;background:#d3dce8"></div>
<div class="a" style="left:210.1px;top:396.6px;width:1px;height:15.75px;background:#d3dce8"></div>
<div class="a" style="left:252.1px;top:396.6px;width:1px;height:15.75px;background:#d3dce8"></div>
<div class="a" style="left:-34px;top:427.70000000000005px;width:286.5px;height:1px;background:#d3dce8"></div>
<div class="a" style="left:5.3px;top:412.35px;width:1px;height:15.75px;background:#d3dce8"></div>
<div class="a" style="left:46.300000000000004px;top:412.35px;width:1px;height:15.75px;background:#d3dce8"></div>
<div class="a" style="left:87.19999999999999px;top:412.35px;width:1px;height:15.75px;background:#d3dce8"></div>
<div class="a" style="left:127.9px;top:412.35px;width:1px;height:15.75px;background:#d3dce8"></div>
<div class="a" style="left:168.9px;top:412.35px;width:1px;height:15.75px;background:#d3dce8"></div>
<div class="a" style="left:210.1px;top:412.35px;width:1px;height:15.75px;background:#d3dce8"></div>
<div class="a" style="left:252.1px;top:412.35px;width:1px;height:15.75px;background:#d3dce8"></div>
<div class="a" style="left:-34px;top:443.45000000000005px;width:286.5px;height:1px;background:#d3dce8"></div>
<div class="a" style="left:5.3px;top:428.1px;width:1px;height:15.75px;background:#d3dce8"></div>
<div class="a" style="left:46.300000000000004px;top:428.1px;width:1px;height:15.75px;background:#d3dce8"></div>
<div class="a" style="left:87.19999999999999px;top:428.1px;width:1px;height:15.75px;background:#d3dce8"></div>
<div class="a" style="left:127.9px;top:428.1px;width:1px;height:15.75px;background:#d3dce8"></div>
<div class="a" style="left:168.9px;top:428.1px;width:1px;height:15.75px;background:#d3dce8"></div>
<div class="a" style="left:210.1px;top:428.1px;width:1px;height:15.75px;background:#d3dce8"></div>
<div class="a" style="left:252.1px;top:428.1px;width:1px;height:15.75px;background:#d3dce8"></div>
<div class="a" style="left:-34px;top:459.20000000000005px;width:286.5px;height:1px;background:#d3dce8"></div>
<div class="a" style="left:5.3px;top:443.85px;width:1px;height:15.75px;background:#d3dce8"></div>
<div class="a" style="left:46.300000000000004px;top:443.85px;width:1px;height:15.75px;background:#d3dce8"></div>
<div class="a" style="left:87.19999999999999px;top:443.85px;width:1px;height:15.75px;background:#d3dce8"></div>
<div class="a" style="left:127.9px;top:443.85px;width:1px;height:15.75px;background:#d3dce8"></div>
<div class="a" style="left:168.9px;top:443.85px;width:1px;height:15.75px;background:#d3dce8"></div>
<div class="a" style="left:210.1px;top:443.85px;width:1px;height:15.75px;background:#d3dce8"></div>
<div class="a" style="left:252.1px;top:443.85px;width:1px;height:15.75px;background:#d3dce8"></div>
<div class="a" style="left:-34px;top:474.95000000000005px;width:286.5px;height:1px;background:#d3dce8"></div>
<div class="a" style="left:5.3px;top:459.6px;width:1px;height:15.75px;background:#d3dce8"></div>
<div class="a" style="left:46.300000000000004px;top:459.6px;width:1px;height:15.75px;background:#d3dce8"></div>
<div class="a" style="left:87.19999999999999px;top:459.6px;width:1px;height:15.75px;background:#d3dce8"></div>
<div class="a" style="left:127.9px;top:459.6px;width:1px;height:15.75px;background:#d3dce8"></div>
<div class="a" style="left:168.9px;top:459.6px;width:1px;height:15.75px;background:#d3dce8"></div>
<div class="a" style="left:210.1px;top:459.6px;width:1px;height:15.75px;background:#d3dce8"></div>
<div class="a" style="left:252.1px;top:459.6px;width:1px;height:15.75px;background:#d3dce8"></div>
<div class="a" style="left:-34px;top:490.70000000000005px;width:286.5px;height:1px;background:#d3dce8"></div>
<div class="a" style="left:5.3px;top:475.35px;width:1px;height:15.75px;background:#d3dce8"></div>
<div class="a" style="left:46.300000000000004px;top:475.35px;width:1px;height:15.75px;background:#d3dce8"></div>
<div class="a" style="left:87.19999999999999px;top:475.35px;width:1px;height:15.75px;background:#d3dce8"></div>
<div class="a" style="left:127.9px;top:475.35px;width:1px;height:15.75px;background:#d3dce8"></div>
<div class="a" style="left:168.9px;top:475.35px;width:1px;height:15.75px;background:#d3dce8"></div>
<div class="a" style="left:210.1px;top:475.35px;width:1px;height:15.75px;background:#d3dce8"></div>
<div class="a" style="left:252.1px;top:475.35px;width:1px;height:15.75px;background:#d3dce8"></div>
<div class="a" style="left:-34px;top:506.45000000000005px;width:286.5px;height:1px;background:#d3dce8"></div>
<div class="a" style="left:5.3px;top:491.1px;width:1px;height:15.75px;background:#d3dce8"></div>
<div class="a" style="left:46.300000000000004px;top:491.1px;width:1px;height:15.75px;background:#d3dce8"></div>
<div class="a" style="left:87.19999999999999px;top:491.1px;width:1px;height:15.75px;background:#d3dce8"></div>
<div class="a" style="left:127.9px;top:491.1px;width:1px;height:15.75px;background:#d3dce8"></div>
<div class="a" style="left:168.9px;top:491.1px;width:1px;height:15.75px;background:#d3dce8"></div>
<div class="a" style="left:210.1px;top:491.1px;width:1px;height:15.75px;background:#d3dce8"></div>
<div class="a" style="left:252.1px;top:491.1px;width:1px;height:15.75px;background:#d3dce8"></div>
<div class="a" style="left:-34px;top:522.2px;width:286.5px;height:1px;background:#d3dce8"></div>
<div class="a" style="left:5.3px;top:506.85px;width:1px;height:15.75px;background:#d3dce8"></div>
<div class="a" style="left:46.300000000000004px;top:506.85px;width:1px;height:15.75px;background:#d3dce8"></div>
<div class="a" style="left:87.19999999999999px;top:506.85px;width:1px;height:15.75px;background:#d3dce8"></div>
<div class="a" style="left:127.9px;top:506.85px;width:1px;height:15.75px;background:#d3dce8"></div>
<div class="a" style="left:168.9px;top:506.85px;width:1px;height:15.75px;background:#d3dce8"></div>
<div class="a" style="left:210.1px;top:506.85px;width:1px;height:15.75px;background:#d3dce8"></div>
<div class="a" style="left:252.1px;top:506.85px;width:1px;height:15.75px;background:#d3dce8"></div>
<div class="a" style="left:-34px;top:537.95px;width:286.5px;height:1px;background:#d3dce8"></div>
<div class="a" style="left:5.3px;top:522.6px;width:1px;height:15.75px;background:#d3dce8"></div>
<div class="a" style="left:46.300000000000004px;top:522.6px;width:1px;height:15.75px;background:#d3dce8"></div>
<div class="a" style="left:87.19999999999999px;top:522.6px;width:1px;height:15.75px;background:#d3dce8"></div>
<div class="a" style="left:127.9px;top:522.6px;width:1px;height:15.75px;background:#d3dce8"></div>
<div class="a" style="left:168.9px;top:522.6px;width:1px;height:15.75px;background:#d3dce8"></div>
<div class="a" style="left:210.1px;top:522.6px;width:1px;height:15.75px;background:#d3dce8"></div>
<div class="a" style="left:252.1px;top:522.6px;width:1px;height:15.75px;background:#d3dce8"></div>
<div class="a" style="left:-34px;top:553.7px;width:286.5px;height:1px;background:#d3dce8"></div>
<div class="a" style="left:5.3px;top:538.35px;width:1px;height:15.75px;background:#d3dce8"></div>
<div class="a" style="left:46.300000000000004px;top:538.35px;width:1px;height:15.75px;background:#d3dce8"></div>
<div class="a" style="left:87.19999999999999px;top:538.35px;width:1px;height:15.75px;background:#d3dce8"></div>
<div class="a" style="left:127.9px;top:538.35px;width:1px;height:15.75px;background:#d3dce8"></div>
<div class="a" style="left:168.9px;top:538.35px;width:1px;height:15.75px;background:#d3dce8"></div>
<div class="a" style="left:210.1px;top:538.35px;width:1px;height:15.75px;background:#d3dce8"></div>
<div class="a" style="left:252.1px;top:538.35px;width:1px;height:15.75px;background:#d3dce8"></div>
<div class="a" style="left:-34px;top:569.45px;width:286.5px;height:1px;background:#d3dce8"></div>
<div class="a" style="left:5.3px;top:554.1px;width:1px;height:15.75px;background:#d3dce8"></div>
<div class="a" style="left:46.300000000000004px;top:554.1px;width:1px;height:15.75px;background:#d3dce8"></div>
<div class="a" style="left:87.19999999999999px;top:554.1px;width:1px;height:15.75px;background:#d3dce8"></div>
<div class="a" style="left:127.9px;top:554.1px;width:1px;height:15.75px;background:#d3dce8"></div>
<div class="a" style="left:168.9px;top:554.1px;width:1px;height:15.75px;background:#d3dce8"></div>
<div class="a" style="left:210.1px;top:554.1px;width:1px;height:15.75px;background:#d3dce8"></div>
<div class="a" style="left:252.1px;top:554.1px;width:1px;height:15.75px;background:#d3dce8"></div>
<div class="a" style="left:5.3px;top:569.85px;width:1px;height:15.149999999999977px;background:#d3dce8"></div>
<div class="a" style="left:46.300000000000004px;top:569.85px;width:1px;height:15.149999999999977px;background:#d3dce8"></div>
<div class="a" style="left:87.19999999999999px;top:569.85px;width:1px;height:15.149999999999977px;background:#d3dce8"></div>
<div class="a" style="left:127.9px;top:569.85px;width:1px;height:15.149999999999977px;background:#d3dce8"></div>
<div class="a" style="left:168.9px;top:569.85px;width:1px;height:15.149999999999977px;background:#d3dce8"></div>
<div class="a" style="left:210.1px;top:569.85px;width:1px;height:15.149999999999977px;background:#d3dce8"></div>
<div class="a" style="left:252.1px;top:569.85px;width:1px;height:15.149999999999977px;background:#d3dce8"></div>
<div class="a" style="left:-35px;top:396.6px;width:287.5px;height:188.39999999999998px;overflow:hidden">
<div class="t cr" style="left:0.0px;top:1.9px;width:38.2px;line-height:15.75px;color:#e0303a;">1.0</div>
<div class="t cr" style="left:40.7px;top:1.9px;width:38.5px;line-height:15.75px;color:#1e2530;">99.99</div>
<div class="t cr" style="left:81.7px;top:1.9px;width:38.4px;line-height:15.75px;color:#1e2530;">-2.24</div>
<div class="t cr" style="left:122.6px;top:1.9px;width:38.2px;line-height:15.75px;color:#1e2530;">3.06</div>
<div class="t cr" style="left:0.0px;top:17.6px;width:38.2px;line-height:15.75px;color:#e0303a;">1.3</div>
<div class="t cr" style="left:40.7px;top:17.6px;width:38.5px;line-height:15.75px;color:#1e2530;">-57.67</div>
<div class="t cr" style="left:81.7px;top:17.6px;width:38.4px;line-height:15.75px;color:#1e2530;">-0.94</div>
<div class="t cr" style="left:122.6px;top:17.6px;width:38.2px;line-height:15.75px;color:#1e2530;">3.10</div>
<div class="t cr" style="left:0.0px;top:33.4px;width:38.2px;line-height:15.75px;color:#e0303a;">1.3</div>
<div class="t cr" style="left:40.7px;top:33.4px;width:38.5px;line-height:15.75px;color:#1e2530;">-39.47</div>
<div class="t cr" style="left:81.7px;top:33.4px;width:38.4px;line-height:15.75px;color:#1e2530;">-1.16</div>
<div class="t cr" style="left:122.6px;top:33.4px;width:38.2px;line-height:15.75px;color:#1e2530;">3.05</div>
<div class="t cr" style="left:0.0px;top:49.1px;width:38.2px;line-height:15.75px;color:#e0303a;">1.5</div>
<div class="t cr" style="left:40.7px;top:49.1px;width:38.5px;line-height:15.75px;color:#1e2530;">-34.01</div>
<div class="t cr" style="left:81.7px;top:49.1px;width:38.4px;line-height:15.75px;color:#1e2530;">-1.17</div>
<div class="t cr" style="left:122.6px;top:49.1px;width:38.2px;line-height:15.75px;color:#1e2530;">2.90</div>
<div class="t cr" style="left:0.0px;top:64.9px;width:38.2px;line-height:15.75px;color:#e0303a;">1.5</div>
<div class="t cr" style="left:40.7px;top:64.9px;width:38.5px;line-height:15.75px;color:#1e2530;">-29.23</div>
<div class="t cr" style="left:81.7px;top:64.9px;width:38.4px;line-height:15.75px;color:#1e2530;">-1.15</div>
<div class="t cr" style="left:122.6px;top:64.9px;width:38.2px;line-height:15.75px;color:#1e2530;">2.72</div>
<div class="t cr" style="left:0.0px;top:80.7px;width:38.2px;line-height:15.75px;color:#2a9a3a;">1.5</div>
<div class="t cr" style="left:40.7px;top:80.7px;width:38.5px;line-height:15.75px;color:#1e2530;">-25.07</div>
<div class="t cr" style="left:81.7px;top:80.7px;width:38.4px;line-height:15.75px;color:#1e2530;">-1.11</div>
<div class="t cr" style="left:122.6px;top:80.7px;width:38.2px;line-height:15.75px;color:#1e2530;">2.52</div>
<div class="t cr" style="left:0.0px;top:96.4px;width:38.2px;line-height:15.75px;color:#e0303a;">1.5</div>
<div class="t cr" style="left:40.7px;top:96.4px;width:38.5px;line-height:15.75px;color:#1e2530;">-21.39</div>
<div class="t cr" style="left:81.7px;top:96.4px;width:38.4px;line-height:15.75px;color:#1e2530;">-1.06</div>
<div class="t cr" style="left:122.6px;top:96.4px;width:38.2px;line-height:15.75px;color:#1e2530;">2.31</div>
<div class="t cr" style="left:0.0px;top:112.2px;width:38.2px;line-height:15.75px;color:#e0303a;">1.5</div>
<div class="t cr" style="left:40.7px;top:112.2px;width:38.5px;line-height:15.75px;color:#1e2530;">-18.19</div>
<div class="t cr" style="left:81.7px;top:112.2px;width:38.4px;line-height:15.75px;color:#1e2530;">-0.99</div>
<div class="t cr" style="left:122.6px;top:112.2px;width:38.2px;line-height:15.75px;color:#1e2530;">2.09</div>
<div class="t cr" style="left:0.0px;top:127.9px;width:38.2px;line-height:15.75px;color:#e0303a;">1.5</div>
<div class="t cr" style="left:40.7px;top:127.9px;width:38.5px;line-height:15.75px;color:#1e2530;">-15.41</div>
<div class="t cr" style="left:81.7px;top:127.9px;width:38.4px;line-height:15.75px;color:#1e2530;">-0.91</div>
<div class="t cr" style="left:122.6px;top:127.9px;width:38.2px;line-height:15.75px;color:#1e2530;">1.88</div>
<div class="t cr" style="left:0.0px;top:143.7px;width:38.2px;line-height:15.75px;color:#2a9a3a;">1.3</div>
<div class="t cr" style="left:40.7px;top:143.7px;width:38.5px;line-height:15.75px;color:#1e2530;">-13.02</div>
<div class="t cr" style="left:81.7px;top:143.7px;width:38.4px;line-height:15.75px;color:#1e2530;">-0.84</div>
<div class="t cr" style="left:122.6px;top:143.7px;width:38.2px;line-height:15.75px;color:#1e2530;">1.68</div>
<div class="t cr" style="left:0.0px;top:159.4px;width:38.2px;line-height:15.75px;color:#2a9a3a;">1.4</div>
<div class="t cr" style="left:40.7px;top:159.4px;width:38.5px;line-height:15.75px;color:#1e2530;">-10.94</div>
<div class="t cr" style="left:81.7px;top:159.4px;width:38.4px;line-height:15.75px;color:#1e2530;">-0.76</div>
<div class="t cr" style="left:122.6px;top:159.4px;width:38.2px;line-height:15.75px;color:#1e2530;">1.48</div>
<div class="t cr" style="left:0.0px;top:175.2px;width:38.2px;line-height:15.75px;color:#2a9a3a;">1.5</div>
<div class="t cr" style="left:40.7px;top:175.2px;width:38.5px;line-height:15.75px;color:#1e2530;">-9.18</div>
<div class="t cr" style="left:81.7px;top:175.2px;width:38.4px;line-height:15.75px;color:#1e2530;">-0.69</div>
<div class="t cr" style="left:122.6px;top:175.2px;width:38.2px;line-height:15.75px;color:#1e2530;">1.31</div>
</div>
<div class="a" style="left:256.3px;top:378.5px;width:287.7px;height:207.5px;background:#d3d9e7;border:1px solid #bcc5d3"></div>
<div class="a" style="left:257.3px;top:378.5px;width:285.7px;height:18.1px;background:#f6f8fc;border-bottom:1px solid #ccd4e0"></div>
<div class="a" style="left:293.7px;top:378.5px;width:1px;height:18.1px;background:#dde3ec"></div>
<div class="t cc" style="left:256.3px;top:378.5px;width:38.4px;line-height:18.1px;color:#3a4350;">Mid</div>
<div class="a" style="left:331.9px;top:378.5px;width:1px;height:18.1px;background:#dde3ec"></div>
<div class="t cc" style="left:294.7px;top:378.5px;width:38.2px;line-height:18.1px;color:#3a4350;">Delta</div>
<div class="a" style="left:369.5px;top:378.5px;width:1px;height:18.1px;background:#dde3ec"></div>
<div class="t cc" style="left:332.9px;top:378.5px;width:37.6px;line-height:18.1px;color:#3a4350;">Theta</div>
<div class="a" style="left:407.6px;top:378.5px;width:1px;height:18.1px;background:#dde3ec"></div>
<div class="t cc" style="left:370.5px;top:378.5px;width:38.1px;line-height:18.1px;color:#3a4350;">Vega</div>
<div class="a" style="left:446px;top:378.5px;width:1px;height:18.1px;background:#dde3ec"></div>
<div class="t cc" style="left:408.6px;top:378.5px;width:38.4px;line-height:18.1px;color:#3a4350;">OrigP...</div>
<div class="a" style="left:484.4px;top:378.5px;width:1px;height:18.1px;background:#dde3ec"></div>
<div class="t cc" style="left:447.0px;top:378.5px;width:38.4px;line-height:18.1px;color:#3a4350;">Model</div>
<div class="a" style="left:527.4px;top:378.5px;width:1px;height:18.1px;background:#dde3ec"></div>
<div class="t cc" style="left:485.4px;top:378.5px;width:43.0px;line-height:18.1px;color:#3a4350;">Pos</div>
<div class="a" style="left:257.3px;top:396.6px;width:271.09999999999997px;height:15.75px;background:#a9c0df"></div>
<div class="a" style="left:257.3px;top:412.35px;width:271.09999999999997px;height:15.75px;background:#a9c0df"></div>
<div class="a" style="left:257.3px;top:428.1px;width:271.09999999999997px;height:15.75px;background:#a9c0df"></div>
<div class="a" style="left:257.3px;top:443.85px;width:271.09999999999997px;height:15.75px;background:#a9c0df"></div>
<div class="a" style="left:257.3px;top:459.6px;width:271.09999999999997px;height:15.75px;background:#a9c0df"></div>
<div class="a" style="left:257.3px;top:475.35px;width:271.09999999999997px;height:15.75px;background:#a9c0df"></div>
<div class="a" style="left:257.3px;top:491.1px;width:271.09999999999997px;height:15.75px;background:#a9c0df"></div>
<div class="a" style="left:257.3px;top:506.85px;width:271.09999999999997px;height:15.75px;background:#a9c0df"></div>
<div class="a" style="left:257.3px;top:522.6px;width:271.09999999999997px;height:15.75px;background:#a9c0df"></div>
<div class="a" style="left:257.3px;top:538.35px;width:271.09999999999997px;height:15.75px;background:#a9c0df"></div>
<div class="a" style="left:257.3px;top:554.1px;width:271.09999999999997px;height:15.75px;background:#a9c0df"></div>
<div class="a" style="left:257.3px;top:569.85px;width:271.09999999999997px;height:15.149999999999977px;background:#a9c0df"></div>
<div class="a" style="left:257.3px;top:411.95000000000005px;width:271.09999999999997px;height:1px;background:#d3dce8"></div>
<div class="a" style="left:294.3px;top:396.6px;width:1px;height:15.75px;background:#d3dce8"></div>
<div class="a" style="left:332.5px;top:396.6px;width:1px;height:15.75px;background:#d3dce8"></div>
<div class="a" style="left:370.1px;top:396.6px;width:1px;height:15.75px;background:#d3dce8"></div>
<div class="a" style="left:408.20000000000005px;top:396.6px;width:1px;height:15.75px;background:#d3dce8"></div>
<div class="a" style="left:446.6px;top:396.6px;width:1px;height:15.75px;background:#d3dce8"></div>
<div class="a" style="left:485.0px;top:396.6px;width:1px;height:15.75px;background:#d3dce8"></div>
<div class="a" style="left:528.0px;top:396.6px;width:1px;height:15.75px;background:#d3dce8"></div>
<div class="a" style="left:257.3px;top:427.70000000000005px;width:271.09999999999997px;height:1px;background:#d3dce8"></div>
<div class="a" style="left:294.3px;top:412.35px;width:1px;height:15.75px;background:#d3dce8"></div>
<div class="a" style="left:332.5px;top:412.35px;width:1px;height:15.75px;background:#d3dce8"></div>
<div class="a" style="left:370.1px;top:412.35px;width:1px;height:15.75px;background:#d3dce8"></div>
<div class="a" style="left:408.20000000000005px;top:412.35px;width:1px;height:15.75px;background:#d3dce8"></div>
<div class="a" style="left:446.6px;top:412.35px;width:1px;height:15.75px;background:#d3dce8"></div>
<div class="a" style="left:485.0px;top:412.35px;width:1px;height:15.75px;background:#d3dce8"></div>
<div class="a" style="left:528.0px;top:412.35px;width:1px;height:15.75px;background:#d3dce8"></div>
<div class="a" style="left:257.3px;top:443.45000000000005px;width:271.09999999999997px;height:1px;background:#d3dce8"></div>
<div class="a" style="left:294.3px;top:428.1px;width:1px;height:15.75px;background:#d3dce8"></div>
<div class="a" style="left:332.5px;top:428.1px;width:1px;height:15.75px;background:#d3dce8"></div>
<div class="a" style="left:370.1px;top:428.1px;width:1px;height:15.75px;background:#d3dce8"></div>
<div class="a" style="left:408.20000000000005px;top:428.1px;width:1px;height:15.75px;background:#d3dce8"></div>
<div class="a" style="left:446.6px;top:428.1px;width:1px;height:15.75px;background:#d3dce8"></div>
<div class="a" style="left:485.0px;top:428.1px;width:1px;height:15.75px;background:#d3dce8"></div>
<div class="a" style="left:528.0px;top:428.1px;width:1px;height:15.75px;background:#d3dce8"></div>
<div class="a" style="left:257.3px;top:459.20000000000005px;width:271.09999999999997px;height:1px;background:#d3dce8"></div>
<div class="a" style="left:294.3px;top:443.85px;width:1px;height:15.75px;background:#d3dce8"></div>
<div class="a" style="left:332.5px;top:443.85px;width:1px;height:15.75px;background:#d3dce8"></div>
<div class="a" style="left:370.1px;top:443.85px;width:1px;height:15.75px;background:#d3dce8"></div>
<div class="a" style="left:408.20000000000005px;top:443.85px;width:1px;height:15.75px;background:#d3dce8"></div>
<div class="a" style="left:446.6px;top:443.85px;width:1px;height:15.75px;background:#d3dce8"></div>
<div class="a" style="left:485.0px;top:443.85px;width:1px;height:15.75px;background:#d3dce8"></div>
<div class="a" style="left:528.0px;top:443.85px;width:1px;height:15.75px;background:#d3dce8"></div>
<div class="a" style="left:257.3px;top:474.95000000000005px;width:271.09999999999997px;height:1px;background:#d3dce8"></div>
<div class="a" style="left:294.3px;top:459.6px;width:1px;height:15.75px;background:#d3dce8"></div>
<div class="a" style="left:332.5px;top:459.6px;width:1px;height:15.75px;background:#d3dce8"></div>
<div class="a" style="left:370.1px;top:459.6px;width:1px;height:15.75px;background:#d3dce8"></div>
<div class="a" style="left:408.20000000000005px;top:459.6px;width:1px;height:15.75px;background:#d3dce8"></div>
<div class="a" style="left:446.6px;top:459.6px;width:1px;height:15.75px;background:#d3dce8"></div>
<div class="a" style="left:485.0px;top:459.6px;width:1px;height:15.75px;background:#d3dce8"></div>
<div class="a" style="left:528.0px;top:459.6px;width:1px;height:15.75px;background:#d3dce8"></div>
<div class="a" style="left:257.3px;top:490.70000000000005px;width:271.09999999999997px;height:1px;background:#d3dce8"></div>
<div class="a" style="left:294.3px;top:475.35px;width:1px;height:15.75px;background:#d3dce8"></div>
<div class="a" style="left:332.5px;top:475.35px;width:1px;height:15.75px;background:#d3dce8"></div>
<div class="a" style="left:370.1px;top:475.35px;width:1px;height:15.75px;background:#d3dce8"></div>
<div class="a" style="left:408.20000000000005px;top:475.35px;width:1px;height:15.75px;background:#d3dce8"></div>
<div class="a" style="left:446.6px;top:475.35px;width:1px;height:15.75px;background:#d3dce8"></div>
<div class="a" style="left:485.0px;top:475.35px;width:1px;height:15.75px;background:#d3dce8"></div>
<div class="a" style="left:528.0px;top:475.35px;width:1px;height:15.75px;background:#d3dce8"></div>
<div class="a" style="left:257.3px;top:506.45000000000005px;width:271.09999999999997px;height:1px;background:#d3dce8"></div>
<div class="a" style="left:294.3px;top:491.1px;width:1px;height:15.75px;background:#d3dce8"></div>
<div class="a" style="left:332.5px;top:491.1px;width:1px;height:15.75px;background:#d3dce8"></div>
<div class="a" style="left:370.1px;top:491.1px;width:1px;height:15.75px;background:#d3dce8"></div>
<div class="a" style="left:408.20000000000005px;top:491.1px;width:1px;height:15.75px;background:#d3dce8"></div>
<div class="a" style="left:446.6px;top:491.1px;width:1px;height:15.75px;background:#d3dce8"></div>
<div class="a" style="left:485.0px;top:491.1px;width:1px;height:15.75px;background:#d3dce8"></div>
<div class="a" style="left:528.0px;top:491.1px;width:1px;height:15.75px;background:#d3dce8"></div>
<div class="a" style="left:257.3px;top:522.2px;width:271.09999999999997px;height:1px;background:#d3dce8"></div>
<div class="a" style="left:294.3px;top:506.85px;width:1px;height:15.75px;background:#d3dce8"></div>
<div class="a" style="left:332.5px;top:506.85px;width:1px;height:15.75px;background:#d3dce8"></div>
<div class="a" style="left:370.1px;top:506.85px;width:1px;height:15.75px;background:#d3dce8"></div>
<div class="a" style="left:408.20000000000005px;top:506.85px;width:1px;height:15.75px;background:#d3dce8"></div>
<div class="a" style="left:446.6px;top:506.85px;width:1px;height:15.75px;background:#d3dce8"></div>
<div class="a" style="left:485.0px;top:506.85px;width:1px;height:15.75px;background:#d3dce8"></div>
<div class="a" style="left:528.0px;top:506.85px;width:1px;height:15.75px;background:#d3dce8"></div>
<div class="a" style="left:257.3px;top:537.95px;width:271.09999999999997px;height:1px;background:#d3dce8"></div>
<div class="a" style="left:294.3px;top:522.6px;width:1px;height:15.75px;background:#d3dce8"></div>
<div class="a" style="left:332.5px;top:522.6px;width:1px;height:15.75px;background:#d3dce8"></div>
<div class="a" style="left:370.1px;top:522.6px;width:1px;height:15.75px;background:#d3dce8"></div>
<div class="a" style="left:408.20000000000005px;top:522.6px;width:1px;height:15.75px;background:#d3dce8"></div>
<div class="a" style="left:446.6px;top:522.6px;width:1px;height:15.75px;background:#d3dce8"></div>
<div class="a" style="left:485.0px;top:522.6px;width:1px;height:15.75px;background:#d3dce8"></div>
<div class="a" style="left:528.0px;top:522.6px;width:1px;height:15.75px;background:#d3dce8"></div>
<div class="a" style="left:257.3px;top:553.7px;width:271.09999999999997px;height:1px;background:#d3dce8"></div>
<div class="a" style="left:294.3px;top:538.35px;width:1px;height:15.75px;background:#d3dce8"></div>
<div class="a" style="left:332.5px;top:538.35px;width:1px;height:15.75px;background:#d3dce8"></div>
<div class="a" style="left:370.1px;top:538.35px;width:1px;height:15.75px;background:#d3dce8"></div>
<div class="a" style="left:408.20000000000005px;top:538.35px;width:1px;height:15.75px;background:#d3dce8"></div>
<div class="a" style="left:446.6px;top:538.35px;width:1px;height:15.75px;background:#d3dce8"></div>
<div class="a" style="left:485.0px;top:538.35px;width:1px;height:15.75px;background:#d3dce8"></div>
<div class="a" style="left:528.0px;top:538.35px;width:1px;height:15.75px;background:#d3dce8"></div>
<div class="a" style="left:257.3px;top:569.45px;width:271.09999999999997px;height:1px;background:#d3dce8"></div>
<div class="a" style="left:294.3px;top:554.1px;width:1px;height:15.75px;background:#d3dce8"></div>
<div class="a" style="left:332.5px;top:554.1px;width:1px;height:15.75px;background:#d3dce8"></div>
<div class="a" style="left:370.1px;top:554.1px;width:1px;height:15.75px;background:#d3dce8"></div>
<div class="a" style="left:408.20000000000005px;top:554.1px;width:1px;height:15.75px;background:#d3dce8"></div>
<div class="a" style="left:446.6px;top:554.1px;width:1px;height:15.75px;background:#d3dce8"></div>
<div class="a" style="left:485.0px;top:554.1px;width:1px;height:15.75px;background:#d3dce8"></div>
<div class="a" style="left:528.0px;top:554.1px;width:1px;height:15.75px;background:#d3dce8"></div>
<div class="a" style="left:294.3px;top:569.85px;width:1px;height:15.149999999999977px;background:#d3dce8"></div>
<div class="a" style="left:332.5px;top:569.85px;width:1px;height:15.149999999999977px;background:#d3dce8"></div>
<div class="a" style="left:370.1px;top:569.85px;width:1px;height:15.149999999999977px;background:#d3dce8"></div>
<div class="a" style="left:408.20000000000005px;top:569.85px;width:1px;height:15.149999999999977px;background:#d3dce8"></div>
<div class="a" style="left:446.6px;top:569.85px;width:1px;height:15.149999999999977px;background:#d3dce8"></div>
<div class="a" style="left:485.0px;top:569.85px;width:1px;height:15.149999999999977px;background:#d3dce8"></div>
<div class="a" style="left:528.0px;top:569.85px;width:1px;height:15.149999999999977px;background:#d3dce8"></div>
<div class="a" style="left:256.3px;top:396.6px;width:287.7px;height:188.39999999999998px;overflow:hidden">
<div class="t cr" style="left:0.0px;top:1.9px;width:35.9px;line-height:15.75px;color:#2a9a3a;">4.30</div>
<div class="t cr" style="left:38.4px;top:1.9px;width:35.7px;line-height:15.75px;color:#1e2530;">-72.50</div>
<div class="t cr" style="left:76.6px;top:1.9px;width:35.1px;line-height:15.75px;color:#1e2530;">-0.10</div>
<div class="t cr" style="left:114.2px;top:1.9px;width:35.6px;line-height:15.75px;color:#1e2530;">7.48</div>
<div class="t cr" style="left:0.0px;top:17.6px;width:35.9px;line-height:15.75px;color:#e0303a;">3.35</div>
<div class="t cr" style="left:38.4px;top:17.6px;width:35.7px;line-height:15.75px;color:#1e2530;">-54.00</div>
<div class="t cr" style="left:76.6px;top:17.6px;width:35.1px;line-height:15.75px;color:#1e2530;">-0.17</div>
<div class="t cr" style="left:114.2px;top:17.6px;width:35.6px;line-height:15.75px;color:#1e2530;">8.90</div>
<div class="t cr" style="left:0.0px;top:33.4px;width:35.9px;line-height:15.75px;color:#e0303a;">2.585</div>
<div class="t cr" style="left:38.4px;top:33.4px;width:35.7px;line-height:15.75px;color:#1e2530;">-41.30</div>
<div class="t cr" style="left:76.6px;top:33.4px;width:35.1px;line-height:15.75px;color:#1e2530;">-0.20</div>
<div class="t cr" style="left:114.2px;top:33.4px;width:35.6px;line-height:15.75px;color:#1e2530;">8.73</div>
<div class="t cr" style="left:0.0px;top:49.1px;width:35.9px;line-height:15.75px;color:#e0303a;">2.315</div>
<div class="t cr" style="left:38.4px;top:49.1px;width:35.7px;line-height:15.75px;color:#1e2530;">-37.12</div>
<div class="t cr" style="left:76.6px;top:49.1px;width:35.1px;line-height:15.75px;color:#1e2530;">-0.20</div>
<div class="t cr" style="left:114.2px;top:49.1px;width:35.6px;line-height:15.75px;color:#1e2530;">8.47</div>
<div class="t cr" style="left:0.0px;top:64.9px;width:35.9px;line-height:15.75px;color:#2a9a3a;">2.07</div>
<div class="t cr" style="left:38.4px;top:64.9px;width:35.7px;line-height:15.75px;color:#1e2530;">-33.34</div>
<div class="t cr" style="left:76.6px;top:64.9px;width:35.1px;line-height:15.75px;color:#1e2530;">-0.20</div>
<div class="t cr" style="left:114.2px;top:64.9px;width:35.6px;line-height:15.75px;color:#1e2530;">8.15</div>
<div class="t cr" style="left:152.3px;top:64.9px;width:35.9px;line-height:15.75px;color:#1e2530;">2.07</div>
<div class="t cr" style="left:229.1px;top:64.9px;width:40.5px;line-height:15.75px;color:#1e2530;">+1</div>
<div class="t cr" style="left:0.0px;top:80.7px;width:35.9px;line-height:15.75px;color:#e0303a;">1.845</div>
<div class="t cr" style="left:38.4px;top:80.7px;width:35.7px;line-height:15.75px;color:#1e2530;">-29.91</div>
<div class="t cr" style="left:76.6px;top:80.7px;width:35.1px;line-height:15.75px;color:#1e2530;">-0.20</div>
<div class="t cr" style="left:114.2px;top:80.7px;width:35.6px;line-height:15.75px;color:#1e2530;">7.78</div>
<div class="t cr" style="left:0.0px;top:96.4px;width:35.9px;line-height:15.75px;color:#e0303a;">1.635</div>
<div class="t cr" style="left:38.4px;top:96.4px;width:35.7px;line-height:15.75px;color:#1e2530;">-26.75</div>
<div class="t cr" style="left:76.6px;top:96.4px;width:35.1px;line-height:15.75px;color:#1e2530;">-0.19</div>
<div class="t cr" style="left:114.2px;top:96.4px;width:35.6px;line-height:15.75px;color:#1e2530;">7.38</div>
<div class="t cr" style="left:0.0px;top:112.2px;width:35.9px;line-height:15.75px;color:#e0303a;">1.45</div>
<div class="t cr" style="left:38.4px;top:112.2px;width:35.7px;line-height:15.75px;color:#1e2530;">-23.91</div>
<div class="t cr" style="left:76.6px;top:112.2px;width:35.1px;line-height:15.75px;color:#1e2530;">-0.19</div>
<div class="t cr" style="left:114.2px;top:112.2px;width:35.6px;line-height:15.75px;color:#1e2530;">6.95</div>
<div class="t cr" style="left:0.0px;top:127.9px;width:35.9px;line-height:15.75px;color:#2a9a3a;">1.29</div>
<div class="t cr" style="left:38.4px;top:127.9px;width:35.7px;line-height:15.75px;color:#1e2530;">-21.38</div>
<div class="t cr" style="left:76.6px;top:127.9px;width:35.1px;line-height:15.75px;color:#1e2530;">-0.18</div>
<div class="t cr" style="left:114.2px;top:127.9px;width:35.6px;line-height:15.75px;color:#1e2530;">6.53</div>
<div class="t cr" style="left:0.0px;top:143.7px;width:35.9px;line-height:15.75px;color:#2a9a3a;">1.14</div>
<div class="t cr" style="left:38.4px;top:143.7px;width:35.7px;line-height:15.75px;color:#1e2530;">-19.05</div>
<div class="t cr" style="left:76.6px;top:143.7px;width:35.1px;line-height:15.75px;color:#1e2530;">-0.18</div>
<div class="t cr" style="left:114.2px;top:143.7px;width:35.6px;line-height:15.75px;color:#1e2530;">6.09</div>
<div class="t cr" style="left:0.0px;top:159.4px;width:35.9px;line-height:15.75px;color:#2a9a3a;">1.01</div>
<div class="t cr" style="left:38.4px;top:159.4px;width:35.7px;line-height:15.75px;color:#1e2530;">-16.97</div>
<div class="t cr" style="left:76.6px;top:159.4px;width:35.1px;line-height:15.75px;color:#1e2530;">-0.17</div>
<div class="t cr" style="left:114.2px;top:159.4px;width:35.6px;line-height:15.75px;color:#1e2530;">5.67</div>
<div class="t cr" style="left:0.0px;top:175.2px;width:35.9px;line-height:15.75px;color:#e0303a;">0.89</div>
<div class="t cr" style="left:38.4px;top:175.2px;width:35.7px;line-height:15.75px;color:#1e2530;">-15.07</div>
<div class="t cr" style="left:76.6px;top:175.2px;width:35.1px;line-height:15.75px;color:#1e2530;">-0.16</div>
<div class="t cr" style="left:114.2px;top:175.2px;width:35.6px;line-height:15.75px;color:#1e2530;">5.24</div>
</div>
<div class="a" style="left:528.4px;top:379.5px;width:14.600000000000023px;height:205.5px;background:#d3d9e7"></div>
<div class="a" style="left:528.4px;top:379.5px;width:14.600000000000023px;height:17.1px;background:#f6f8fc;border-bottom:1px solid #ccd4e0"></div>
<svg style="left:532.4px;top:402.6px" width="7" height="4"><path d="M0 4L3.5 0L7 4Z" fill="#7a8290"/></svg>
<svg style="left:532.4px;top:575.0px" width="7" height="4"><path d="M0 0L3.5 4L7 0Z" fill="#7a8290"/></svg>
<div class="a" style="left:531.4px;top:478px;width:9px;height:17px;background:#a0a8b4"></div>
<svg style="left:213px;top:590px" width="14" height="4"><g fill="#a9b1bd"><rect x="0" y="0" width="1" height="1"/><rect x="1" y="2" width="0" height="0"/><rect x="2" y="2" width="1" height="1"/><rect x="3" y="0" width="0" height="0"/><rect x="4" y="0" width="1" height="1"/><rect x="5" y="2" width="0" height="0"/><rect x="6" y="2" width="1" height="1"/><rect x="7" y="0" width="0" height="0"/><rect x="8" y="0" width="1" height="1"/><rect x="9" y="2" width="0" height="0"/><rect x="10" y="2" width="1" height="1"/><rect x="11" y="0" width="0" height="0"/><rect x="12" y="0" width="1" height="1"/><rect x="13" y="2" width="0" height="0"/></g></svg>
<svg style="left:549px;top:397px" width="4" height="14"><g fill="#a9b1bd"><rect x="0" y="0" width="1" height="1"/><rect x="2" y="2" width="1" height="1"/><rect x="0" y="4" width="1" height="1"/><rect x="2" y="6" width="1" height="1"/><rect x="0" y="8" width="1" height="1"/><rect x="2" y="10" width="1" height="1"/><rect x="0" y="12" width="1" height="1"/></g></svg>
<div class="a" style="left:-10px;top:599px;width:111px;height:17px;background:#fff;border:1px solid #b5bfcd"></div>
<div class="t" style="left:-4px;top:603px;color:#1e1e1e;font-size:10.5px">bined</div>
<svg style="left:92px;top:606px" width="6" height="4"><path d="M0 0H5L2.5 3Z" fill="#555"/></svg>
<div class="a" style="left:109px;top:599px;width:68px;height:17px;background:#fff;border:1px solid #b5bfcd"></div>
<div class="t" style="left:112px;top:603px;color:#1e1e1e;font-size:10.5px">Auto</div>
<svg style="left:168px;top:606px" width="6" height="4"><path d="M0 0H5L2.5 3Z" fill="#555"/></svg>
<div class="a" style="left:426.5px;top:601px;width:9px;height:9px;background:#fff;border:1px solid #9aa4b2"></div>
<div class="t" style="left:439px;top:601px;color:#2a323e;font-size:10.2px">Ignore Today's Trades</div>
<div class="a" style="left:-8px;top:620px;width:552px;height:49px;background:#fff;border:1px solid #bcc5d3"></div>
<div class="a" style="left:-5.7px;top:620.5px;width:49.300000000000004px;height:16.5px;background:#f4f7fc;border-right:1px solid #d3dae6;border-bottom:1px solid #d3dae6"></div>
<div class="a" style="left:43.6px;top:620.5px;width:49.699999999999996px;height:16.5px;background:#f4f7fc;border-right:1px solid #d3dae6;border-bottom:1px solid #d3dae6"></div>
<div class="a" style="left:93.3px;top:620.5px;width:48.8px;height:16.5px;background:#f4f7fc;border-right:1px solid #d3dae6;border-bottom:1px solid #d3dae6"></div>
<div class="a" style="left:142.1px;top:620.5px;width:49.20000000000002px;height:16.5px;background:#f4f7fc;border-right:1px solid #d3dae6;border-bottom:1px solid #d3dae6"></div>
<div class="a" style="left:191.3px;top:620.5px;width:49.29999999999998px;height:16.5px;background:#f4f7fc;border-right:1px solid #d3dae6;border-bottom:1px solid #d3dae6"></div>
<div class="a" style="left:240.6px;top:620.5px;width:48.70000000000002px;height:16.5px;background:#f4f7fc;border-right:1px solid #d3dae6;border-bottom:1px solid #d3dae6"></div>
<div class="a" style="left:289.3px;top:620.5px;width:50.0px;height:16.5px;background:#f4f7fc;border-right:1px solid #d3dae6;border-bottom:1px solid #d3dae6"></div>
<div class="a" style="left:339.3px;top:620.5px;width:49.39999999999998px;height:16.5px;background:#f4f7fc;border-right:1px solid #d3dae6;border-bottom:1px solid #d3dae6"></div>
<div class="a" style="left:388.7px;top:620.5px;width:49.10000000000002px;height:16.5px;background:#f4f7fc;border-right:1px solid #d3dae6;border-bottom:1px solid #d3dae6"></div>
<div class="a" style="left:437.8px;top:620.5px;width:48.39999999999998px;height:16.5px;background:#f4f7fc;border-right:1px solid #d3dae6;border-bottom:1px solid #d3dae6"></div>
<div class="a" style="left:486.2px;top:620.5px;width:57.69999999999999px;height:16.5px;background:#f4f7fc;border-right:1px solid #d3dae6;border-bottom:1px solid #d3dae6"></div>
<div class="t cc" style="left:-5.7px;top:619.5px;width:49.3px;line-height:16.5px;color:#3a4350;">Cost</div>
<div class="t cc" style="left:43.6px;top:619.5px;width:49.7px;line-height:16.5px;color:#3a4350;">Curr Cost</div>
<div class="t cc" style="left:93.3px;top:619.5px;width:48.8px;line-height:16.5px;color:#3a4350;">Commi...</div>
<div class="t cc" style="left:142.1px;top:619.5px;width:49.2px;line-height:16.5px;color:#3a4350;">PnL</div>
<div class="t cc" style="left:191.3px;top:619.5px;width:49.3px;line-height:16.5px;color:#3a4350;">PnL%</div>
<div class="t cc" style="left:240.6px;top:619.5px;width:48.7px;line-height:16.5px;color:#3a4350;">Delta</div>
<div class="t cc" style="left:289.3px;top:619.5px;width:50.0px;line-height:16.5px;color:#3a4350;">Gamma</div>
<div class="t cc" style="left:339.3px;top:619.5px;width:49.4px;line-height:16.5px;color:#3a4350;">Theta</div>
<div class="t cc" style="left:388.7px;top:619.5px;width:49.1px;line-height:16.5px;color:#3a4350;">Vega</div>
<div class="t cc" style="left:437.8px;top:619.5px;width:48.4px;line-height:16.5px;color:#3a4350;">T/D</div>
<div class="t cc" style="left:486.2px;top:619.5px;width:57.7px;line-height:16.5px;color:#3a4350;">Plot</div>
<div class="a" style="left:-5.7px;top:637px;width:49.300000000000004px;height:0px;background:#fff;border-right:1px solid #d3dae6;border-bottom:1px solid #d3dae6"></div>
<div class="a" style="left:43.6px;top:637px;width:49.699999999999996px;height:0px;background:#fff;border-right:1px solid #d3dae6;border-bottom:1px solid #d3dae6"></div>
<div class="a" style="left:93.3px;top:637px;width:48.8px;height:0px;background:#fff;border-right:1px solid #d3dae6;border-bottom:1px solid #d3dae6"></div>
<div class="a" style="left:142.1px;top:637px;width:49.20000000000002px;height:0px;background:#fff;border-right:1px solid #d3dae6;border-bottom:1px solid #d3dae6"></div>
<div class="a" style="left:191.3px;top:637px;width:49.29999999999998px;height:0px;background:#fff;border-right:1px solid #d3dae6;border-bottom:1px solid #d3dae6"></div>
<div class="a" style="left:240.6px;top:637px;width:48.70000000000002px;height:0px;background:#fff;border-right:1px solid #d3dae6;border-bottom:1px solid #d3dae6"></div>
<div class="a" style="left:289.3px;top:637px;width:50.0px;height:0px;background:#fff;border-right:1px solid #d3dae6;border-bottom:1px solid #d3dae6"></div>
<div class="a" style="left:339.3px;top:637px;width:49.39999999999998px;height:0px;background:#fff;border-right:1px solid #d3dae6;border-bottom:1px solid #d3dae6"></div>
<div class="a" style="left:388.7px;top:637px;width:49.10000000000002px;height:0px;background:#fff;border-right:1px solid #d3dae6;border-bottom:1px solid #d3dae6"></div>
<div class="a" style="left:437.8px;top:637px;width:48.39999999999998px;height:0px;background:#fff;border-right:1px solid #d3dae6;border-bottom:1px solid #d3dae6"></div>
<div class="a" style="left:486.2px;top:637px;width:57.69999999999999px;height:0px;background:#fff;border-right:1px solid #d3dae6;border-bottom:1px solid #d3dae6"></div>
<div class="a" style="left:-5.7px;top:637px;width:49.300000000000004px;height:15.3px;background:#fff;border-right:1px solid #d3dae6;border-bottom:1px solid #d3dae6"></div>
<div class="a" style="left:43.6px;top:637px;width:49.699999999999996px;height:15.3px;background:#fff;border-right:1px solid #d3dae6;border-bottom:1px solid #d3dae6"></div>
<div class="a" style="left:93.3px;top:637px;width:48.8px;height:15.3px;background:#fff;border-right:1px solid #d3dae6;border-bottom:1px solid #d3dae6"></div>
<div class="a" style="left:142.1px;top:637px;width:49.20000000000002px;height:15.3px;background:#fff;border-right:1px solid #d3dae6;border-bottom:1px solid #d3dae6"></div>
<div class="a" style="left:191.3px;top:637px;width:49.29999999999998px;height:15.3px;background:#fff;border-right:1px solid #d3dae6;border-bottom:1px solid #d3dae6"></div>
<div class="a" style="left:240.6px;top:637px;width:48.70000000000002px;height:15.3px;background:#fff;border-right:1px solid #d3dae6;border-bottom:1px solid #d3dae6"></div>
<div class="a" style="left:289.3px;top:637px;width:50.0px;height:15.3px;background:#fff;border-right:1px solid #d3dae6;border-bottom:1px solid #d3dae6"></div>
<div class="a" style="left:339.3px;top:637px;width:49.39999999999998px;height:15.3px;background:#fff;border-right:1px solid #d3dae6;border-bottom:1px solid #d3dae6"></div>
<div class="a" style="left:388.7px;top:637px;width:49.10000000000002px;height:15.3px;background:#fff;border-right:1px solid #d3dae6;border-bottom:1px solid #d3dae6"></div>
<div class="a" style="left:437.8px;top:637px;width:48.39999999999998px;height:15.3px;background:#fff;border-right:1px solid #d3dae6;border-bottom:1px solid #d3dae6"></div>
<div class="a" style="left:486.2px;top:637px;width:57.69999999999999px;height:15.3px;background:#fff;border-right:1px solid #d3dae6;border-bottom:1px solid #d3dae6"></div>
<div class="t cr" style="left:-5.7px;top:638.2px;width:46.8px;line-height:15.3px;color:#1e2530;">-778.40</div>
<div class="t cr" style="left:43.6px;top:638.2px;width:47.2px;line-height:15.3px;color:#1e2530;">777.00</div>
<div class="t cr" style="left:93.3px;top:638.2px;width:46.3px;line-height:15.3px;color:#1e2530;">1.40</div>
<div class="t cr" style="left:142.1px;top:638.2px;width:46.7px;line-height:15.3px;color:#e0303a;">-1.40</div>
<div class="t cr" style="left:191.3px;top:638.2px;width:46.8px;line-height:15.3px;color:#e0303a;">-0.18%</div>
<div class="t cr" style="left:240.6px;top:638.2px;width:46.2px;line-height:15.3px;color:#1e2530;">8.14</div>
<div class="t cr" style="left:289.3px;top:638.2px;width:47.5px;line-height:15.3px;color:#1e2530;">5.90</div>
<div class="t cr" style="left:388.7px;top:638.2px;width:46.6px;line-height:15.3px;color:#1e2530;">16.89</div>
<div class="t cr" style="left:437.8px;top:638.2px;width:45.9px;line-height:15.3px;color:#1e2530;">-8.7</div>
<div class="a" style="left:-5.7px;top:652.3px;width:49.300000000000004px;height:16px;background:#fff;border-right:1px solid #d3dae6;border-bottom:1px solid #d3dae6"></div>
<div class="a" style="left:43.6px;top:652.3px;width:49.699999999999996px;height:16px;background:#fff;border-right:1px solid #d3dae6;border-bottom:1px solid #d3dae6"></div>
<div class="a" style="left:93.3px;top:652.3px;width:48.8px;height:16px;background:#fff;border-right:1px solid #d3dae6;border-bottom:1px solid #d3dae6"></div>
<div class="a" style="left:142.1px;top:652.3px;width:49.20000000000002px;height:16px;background:#fff;border-right:1px solid #d3dae6;border-bottom:1px solid #d3dae6"></div>
<div class="a" style="left:191.3px;top:652.3px;width:49.29999999999998px;height:16px;background:#fff;border-right:1px solid #d3dae6;border-bottom:1px solid #d3dae6"></div>
<div class="a" style="left:240.6px;top:652.3px;width:48.70000000000002px;height:16px;background:#fff;border-right:1px solid #d3dae6;border-bottom:1px solid #d3dae6"></div>
<div class="a" style="left:289.3px;top:652.3px;width:50.0px;height:16px;background:#fff;border-right:1px solid #d3dae6;border-bottom:1px solid #d3dae6"></div>
<div class="a" style="left:339.3px;top:652.3px;width:49.39999999999998px;height:16px;background:#fff;border-right:1px solid #d3dae6;border-bottom:1px solid #d3dae6"></div>
<div class="a" style="left:388.7px;top:652.3px;width:49.10000000000002px;height:16px;background:#fff;border-right:1px solid #d3dae6;border-bottom:1px solid #d3dae6"></div>
<div class="a" style="left:437.8px;top:652.3px;width:48.39999999999998px;height:16px;background:#fff;border-right:1px solid #d3dae6;border-bottom:1px solid #d3dae6"></div>
<div class="a" style="left:486.2px;top:652.3px;width:57.69999999999999px;height:16px;background:#fff;border-right:1px solid #d3dae6;border-bottom:1px solid #d3dae6"></div>
<div class="t cr" style="left:240.6px;top:653.5px;width:46.2px;line-height:16px;color:#1e2530;">0.00</div>
<div class="t cr" style="left:289.3px;top:653.5px;width:47.5px;line-height:16px;color:#1e2530;">0.00</div>
<div class="t cr" style="left:339.3px;top:653.5px;width:46.9px;line-height:16px;color:#1e2530;">0.00</div>
<div class="t cr" style="left:388.7px;top:653.5px;width:46.6px;line-height:16px;color:#1e2530;">0.00</div>
<div class="t cr" style="left:437.8px;top:653.5px;width:45.9px;line-height:16px;color:#1e2530;">0</div>
<div class="a" style="left:339.3px;top:637.5px;width:49px;height:14.5px;background:#ff0000"></div>
<div class="t cr" style="left:339.3px;top:638.9px;width:46.9px;line-height:15.5px;color:#8a1010;">-70.63</div>
<svg style="left:511px;top:640.2px" width="9" height="9"><rect x="0.5" y="0.5" width="8" height="8" fill="#fff" stroke="#a8b0bc"/><path d="M2 4.5L3.8 6.5L7 2" stroke="#4a5564" stroke-width="1.2" fill="none"/></svg>
<svg style="left:511px;top:656.5px" width="9" height="9"><rect x="0.5" y="0.5" width="8" height="8" fill="#fff" stroke="#a8b0bc"/><path d="M2 4.5L3.8 6.5L7 2" stroke="#4a5564" stroke-width="1.2" fill="none"/></svg>
<div class="a" style="left:556px;top:137px;width:524px;height:511px;background:#d3d9e7"></div>
<div class="a" style="left:556px;top:137px;width:2px;height:511px;background:#c3cbdd"></div>
<div class="a" style="left:557px;top:160px;width:523px;height:1px;background:#aab4c4"></div>
<div class="a" style="left:621.2px;top:138.5px;width:66.19999999999993px;height:22px;background:#cfd6e3;border:1px solid #aab4c4;border-left:none"></div>
<div class="t" style="left:621.2px;top:144.5px;width:66.19999999999993px;text-align:center;color:#2a3442">Price Chart</div>
<div class="a" style="left:687.4px;top:138.5px;width:105.89999999999998px;height:22px;background:#cfd6e3;border:1px solid #aab4c4;border-left:none"></div>
<div class="t" style="left:687.4px;top:144.5px;width:105.89999999999998px;text-align:center;color:#2a3442">Movement Analysis</div>
<div class="a" style="left:793.3px;top:138.5px;width:53.40000000000009px;height:22px;background:#cfd6e3;border:1px solid #aab4c4;border-left:none"></div>
<div class="t" style="left:793.3px;top:144.5px;width:53.40000000000009px;text-align:center;color:#2a3442">Volatility</div>
<div class="a" style="left:846.7px;top:138.5px;width:132.69999999999993px;height:22px;background:#cfd6e3;border:1px solid #aab4c4;border-left:none"></div>
<div class="t" style="left:846.7px;top:144.5px;width:132.69999999999993px;text-align:center;color:#2a3442">Statistics &amp; Fundamentals</div>
<div class="a" style="left:557.4px;top:138.5px;width:63.80000000000007px;height:23px;background:#dbe1ec;border:1px solid #aab4c4;border-bottom:none"></div>
<div class="t" style="left:557.4px;top:144.5px;width:63.80000000000007px;text-align:center;color:#2a3442">Risk Chart</div>
<div class="t u" style="left:563px;top:166.8px;color:#2a3442">Vol Adjust</div>
<div class="a" style="left:611.5px;top:163.5px;width:44.5px;height:16px;background:#fff;border:1px solid #b0bac8"></div>
<div class="t" style="left:636px;top:167px;color:#1a1a1a;font-size:10.5px">0</div>
<svg style="left:648px;top:165px" width="7" height="12"><path d="M0.5 4L3.5 1L6.5 4Z M0.5 8L3.5 11L6.5 8Z" fill="#505864"/></svg>
<div class="t u" style="left:981px;top:166.8px;color:#2a3442">Projection</div>
<div class="a" style="left:1028.5px;top:164px;width:60px;height:16px;background:#fff;border:1px solid #b0bac8"></div>
<div class="t" style="left:1031px;top:167px;color:#1a1a1a;font-size:10.5px">24/04/2025</div>
<div class="a" style="left:558px;top:183px;width:522px;height:465px;background:#fff"></div>
<svg style="left:0;top:0" width="1080" height="675" viewBox="0 0 1080 675">
<rect x="735.1" y="198.3" width="223.3" height="271.1" fill="#92c9d9"/>
<rect x="790.8" y="198.3" width="112" height="271.1" fill="#4e80bc"/>
<line x1="602" y1="198.30" x2="1080" y2="198.30" stroke="#e6e8ee" stroke-width="1"/>
<line x1="602" y1="219.15" x2="1080" y2="219.15" stroke="#e6e8ee" stroke-width="1"/>
<line x1="602" y1="240.00" x2="1080" y2="240.00" stroke="#e6e8ee" stroke-width="1"/>
<line x1="602" y1="260.85" x2="1080" y2="260.85" stroke="#e6e8ee" stroke-width="1"/>
<line x1="602" y1="281.70" x2="1080" y2="281.70" stroke="#e6e8ee" stroke-width="1"/>
<line x1="602" y1="302.55" x2="1080" y2="302.55" stroke="#e6e8ee" stroke-width="1"/>
<line x1="602" y1="323.40" x2="1080" y2="323.40" stroke="#e6e8ee" stroke-width="1"/>
<line x1="602" y1="344.25" x2="1080" y2="344.25" stroke="#e6e8ee" stroke-width="1"/>
<line x1="602" y1="365.10" x2="1080" y2="365.10" stroke="#e6e8ee" stroke-width="1"/>
<line x1="602" y1="385.95" x2="1080" y2="385.95" stroke="#e6e8ee" stroke-width="1"/>
<line x1="602" y1="406.80" x2="1080" y2="406.80" stroke="#e6e8ee" stroke-width="1"/>
<line x1="602" y1="427.65" x2="1080" y2="427.65" stroke="#e6e8ee" stroke-width="1"/>
<line x1="602" y1="448.50" x2="1080" y2="448.50" stroke="#e6e8ee" stroke-width="1"/>
<line x1="602" y1="469.35" x2="1080" y2="469.35" stroke="#e6e8ee" stroke-width="1"/>
<line x1="653.00" y1="198.3" x2="653.00" y2="470" stroke="#e6e8ee" stroke-width="1"/>
<line x1="711.90" y1="198.3" x2="711.90" y2="470" stroke="#e6e8ee" stroke-width="1"/>
<line x1="770.80" y1="198.3" x2="770.80" y2="470" stroke="#e6e8ee" stroke-width="1"/>
<line x1="829.70" y1="198.3" x2="829.70" y2="470" stroke="#e6e8ee" stroke-width="1"/>
<line x1="888.60" y1="198.3" x2="888.60" y2="470" stroke="#e6e8ee" stroke-width="1"/>
<line x1="947.50" y1="198.3" x2="947.50" y2="470" stroke="#e6e8ee" stroke-width="1"/>
<line x1="1006.40" y1="198.3" x2="1006.40" y2="470" stroke="#e6e8ee" stroke-width="1"/>
<line x1="1065.30" y1="198.3" x2="1065.30" y2="470" stroke="#e6e8ee" stroke-width="1"/>
<line x1="604.7" y1="198.3" x2="604.7" y2="470" stroke="#e4e6ec" stroke-width="1"/>
<line x1="736.3" y1="198.30" x2="957.7" y2="198.30" stroke="#ffffff" stroke-opacity="0.32" stroke-width="1"/>
<line x1="736.3" y1="219.15" x2="957.7" y2="219.15" stroke="#ffffff" stroke-opacity="0.32" stroke-width="1"/>
<line x1="736.3" y1="240.00" x2="957.7" y2="240.00" stroke="#ffffff" stroke-opacity="0.32" stroke-width="1"/>
<line x1="736.3" y1="260.85" x2="957.7" y2="260.85" stroke="#ffffff" stroke-opacity="0.32" stroke-width="1"/>
<line x1="736.3" y1="281.70" x2="957.7" y2="281.70" stroke="#ffffff" stroke-opacity="0.32" stroke-width="1"/>
<line x1="736.3" y1="302.55" x2="957.7" y2="302.55" stroke="#ffffff" stroke-opacity="0.32" stroke-width="1"/>
<line x1="736.3" y1="323.40" x2="957.7" y2="323.40" stroke="#ffffff" stroke-opacity="0.32" stroke-width="1"/>
<line x1="736.3" y1="344.25" x2="957.7" y2="344.25" stroke="#ffffff" stroke-opacity="0.32" stroke-width="1"/>
<line x1="736.3" y1="365.10" x2="957.7" y2="365.10" stroke="#ffffff" stroke-opacity="0.32" stroke-width="1"/>
<line x1="736.3" y1="385.95" x2="957.7" y2="385.95" stroke="#ffffff" stroke-opacity="0.32" stroke-width="1"/>
<line x1="736.3" y1="406.80" x2="957.7" y2="406.80" stroke="#ffffff" stroke-opacity="0.32" stroke-width="1"/>
<line x1="736.3" y1="427.65" x2="957.7" y2="427.65" stroke="#ffffff" stroke-opacity="0.32" stroke-width="1"/>
<line x1="736.3" y1="448.50" x2="957.7" y2="448.50" stroke="#ffffff" stroke-opacity="0.32" stroke-width="1"/>
<line x1="736.3" y1="469.35" x2="957.7" y2="469.35" stroke="#ffffff" stroke-opacity="0.32" stroke-width="1"/>
<line x1="770.80" y1="198.3" x2="770.80" y2="469.4" stroke="#ffffff" stroke-opacity="0.32" stroke-width="1"/>
<line x1="829.70" y1="198.3" x2="829.70" y2="469.4" stroke="#ffffff" stroke-opacity="0.32" stroke-width="1"/>
<line x1="888.60" y1="198.3" x2="888.60" y2="469.4" stroke="#ffffff" stroke-opacity="0.32" stroke-width="1"/>
<line x1="947.50" y1="198.3" x2="947.50" y2="469.4" stroke="#ffffff" stroke-opacity="0.32" stroke-width="1"/>
<line x1="713.3" y1="199" x2="713.3" y2="469" stroke="#a448c0" stroke-width="1.1" stroke-dasharray="3.5,3.2"/>
<line x1="1010.1" y1="199" x2="1010.1" y2="469" stroke="#a448c0" stroke-width="1.1" stroke-dasharray="3.5,3.2"/>
<line x1="604.7" y1="365.2" x2="1080" y2="365.2" stroke="#54585f" stroke-width="1.3"/>
<path d="M604.7,269.60 L606.7,271.26 L608.7,272.91 L610.7,274.57 L612.7,276.22 L614.7,277.87 L616.7,279.52 L618.7,281.16 L620.7,282.80 L622.7,284.44 L624.7,286.08 L626.7,287.72 L628.7,289.35 L630.7,290.98 L632.7,292.60 L634.7,294.22 L636.7,295.84 L638.7,297.46 L640.7,299.07 L642.7,300.68 L644.7,302.29 L646.7,303.89 L648.7,305.48 L650.7,307.08 L652.7,308.66 L654.7,310.25 L656.7,311.83 L658.7,313.40 L660.7,314.97 L662.7,316.53 L664.7,318.09 L666.7,319.64 L668.7,321.19 L670.7,322.73 L672.7,324.26 L674.7,325.79 L676.7,327.31 L678.7,328.82 L680.7,330.32 L682.7,331.82 L684.7,333.31 L686.7,334.79 L688.7,336.26 L690.7,337.72 L692.7,339.17 L694.7,340.62 L696.7,342.05 L698.7,343.48 L700.7,344.89 L702.7,346.29 L704.7,347.68 L706.7,349.06 L708.7,350.43 L710.7,351.78 L712.7,353.12 L714.7,354.50 L716.7,355.86 L718.7,357.21 L720.7,358.55 L722.7,359.87 L724.7,361.18 L726.7,362.47 L728.7,363.75 L730.7,365.01 L732.7,366.25 L734.7,367.47 L736.7,368.68 L738.7,369.87 L740.7,371.04 L742.7,372.20 L744.7,373.33 L746.7,374.44 L748.7,375.54 L750.7,376.61 L752.7,377.66 L754.7,378.69 L756.7,379.71 L758.7,380.69 L760.7,381.66 L762.7,382.60 L764.7,383.52 L766.7,384.42 L768.7,385.30 L770.7,386.15 L772.7,386.97 L774.7,387.78 L776.7,388.56 L778.7,389.31 L780.7,390.04 L782.7,390.74 L784.7,391.42 L786.7,392.07 L788.7,392.70 L790.7,393.30 L792.7,393.87 L794.7,394.42 L796.7,394.94 L798.7,395.44 L800.7,395.91 L802.7,396.35 L804.7,396.77 L806.7,397.16 L808.7,397.52 L810.7,397.86 L812.7,398.17 L814.7,398.45 L816.7,398.71 L818.7,398.94 L820.7,399.15 L822.7,399.32 L824.7,399.48 L826.7,399.60 L828.7,399.70 L830.7,399.78 L832.7,399.83 L834.7,399.85 L836.7,399.85 L838.7,399.82 L840.7,399.77 L842.7,399.70 L844.7,399.60 L846.7,399.47 L848.7,399.32 L850.7,399.15 L852.7,398.96 L854.7,398.74 L856.7,398.50 L858.7,398.24 L860.7,397.95 L862.7,397.64 L864.7,397.31 L866.7,396.96 L868.7,396.59 L870.7,396.20 L872.7,395.78 L874.7,395.35 L876.7,394.90 L878.7,394.42 L880.7,393.93 L882.7,393.42 L884.7,392.89 L886.7,392.34 L888.7,391.78 L890.7,391.19 L892.7,390.59 L894.7,389.97 L896.7,389.34 L898.7,388.69 L900.7,388.02 L902.7,387.33 L904.7,386.63 L906.7,385.92 L908.7,385.19 L910.7,384.44 L912.7,383.68 L914.7,382.91 L916.7,382.12 L918.7,381.32 L920.7,380.50 L922.7,379.68 L924.7,378.83 L926.7,377.98 L928.7,377.11 L930.7,376.23 L932.7,375.34 L934.7,374.44 L936.7,373.52 L938.7,372.59 L940.7,371.65 L942.7,370.71 L944.7,369.74 L946.7,368.77 L948.7,367.79 L950.7,366.80 L952.7,365.79 L954.7,364.78 L956.7,363.76 L958.7,362.73 L960.7,361.68 L962.7,360.63 L964.7,359.57 L966.7,358.50 L968.7,357.42 L970.7,356.33 L972.7,355.23 L974.7,354.13 L976.7,353.01 L978.7,351.89 L980.7,350.76 L982.7,349.62 L984.7,348.47 L986.7,347.31 L988.7,346.15 L990.7,344.98 L992.7,343.80 L994.7,342.61 L996.7,341.41 L998.7,340.21 L1000.7,339.00 L1002.7,337.78 L1004.7,336.56 L1006.7,335.33 L1008.7,334.09 L1010.7,332.84 L1012.7,331.59 L1014.7,330.33 L1016.7,329.07 L1018.7,327.79 L1020.7,326.51 L1022.7,325.23 L1024.7,323.93 L1026.7,322.64 L1028.7,321.33 L1030.7,320.02 L1032.7,318.70 L1034.7,317.38 L1036.7,316.05 L1038.7,314.71 L1040.7,313.37 L1042.7,312.02 L1044.7,310.67 L1046.7,309.31 L1048.7,307.94 L1050.7,306.57 L1052.7,305.19 L1054.7,303.81 L1056.7,302.42 L1058.7,301.03 L1060.7,299.63 L1062.7,298.23 L1064.7,296.82 L1066.7,295.41 L1068.7,293.99 L1070.7,292.56 L1072.7,291.13 L1074.7,289.70 L1076.7,288.26 L1078.7,286.82" stroke="#f07474" stroke-width="1.1" fill="none"/>
<path d="M604.7,269.2 L805.8,446 L917.9,446 L1080,303.6" stroke="#4b52c8" stroke-width="1.5" fill="none"/>
<path d="M604.7,262.10 L606.7,263.61 L608.7,265.12 L610.7,266.62 L612.7,268.12 L614.7,269.62 L616.7,271.10 L618.7,272.59 L620.7,274.06 L622.7,275.53 L624.7,277.00 L626.7,278.46 L628.7,279.91 L630.7,281.36 L632.7,282.80 L634.7,284.23 L636.7,285.66 L638.7,287.08 L640.7,288.49 L642.7,289.89 L644.7,291.29 L646.7,292.68 L648.7,294.07 L650.7,295.44 L652.7,296.81 L654.7,298.16 L656.7,299.51 L658.7,300.86 L660.7,302.19 L662.7,303.51 L664.7,304.83 L666.7,306.13 L668.7,307.43 L670.7,308.71 L672.7,309.99 L674.7,311.25 L676.7,312.51 L678.7,313.75 L680.7,314.98 L682.7,316.21 L684.7,317.42 L686.7,318.62 L688.7,319.81 L690.7,320.98 L692.7,322.15 L694.7,323.30 L696.7,324.44 L698.7,325.57 L700.7,326.68 L702.7,327.79 L704.7,328.87 L706.7,329.95 L708.7,331.01 L710.7,332.06 L712.7,333.09 L714.7,334.15 L716.7,335.20 L718.7,336.23 L720.7,337.25 L722.7,338.26 L724.7,339.25 L726.7,340.22 L728.7,341.18 L730.7,342.12 L732.7,343.05 L734.7,343.96 L736.7,344.86 L738.7,345.73 L740.7,346.59 L742.7,347.44 L744.7,348.27 L746.7,349.08 L748.7,349.87 L750.7,350.65 L752.7,351.41 L754.7,352.15 L756.7,352.87 L758.7,353.58 L760.7,354.26 L762.7,354.93 L764.7,355.59 L766.7,356.22 L768.7,356.83 L770.7,357.43 L772.7,358.01 L774.7,358.56 L776.7,359.10 L778.7,359.62 L780.7,360.13 L782.7,360.61 L784.7,361.07 L786.7,361.52 L788.7,361.94 L790.7,362.35 L792.7,362.74 L794.7,363.10 L796.7,363.45 L798.7,363.78 L800.7,364.09 L802.7,364.38 L804.7,364.65 L806.7,364.91 L808.7,365.14 L810.7,365.35 L812.7,365.54 L814.7,365.72 L816.7,365.88 L818.7,366.01 L820.7,366.13 L822.7,366.23 L824.7,366.31 L826.7,366.37 L828.7,366.41 L830.7,366.43 L832.7,366.43 L834.7,366.42 L836.7,366.38 L838.7,366.33 L840.7,366.26 L842.7,366.17 L844.7,366.06 L846.7,365.94 L848.7,365.80 L850.7,365.63 L852.7,365.45 L854.7,365.26 L856.7,365.04 L858.7,364.81 L860.7,364.56 L862.7,364.30 L864.7,364.01 L866.7,363.71 L868.7,363.40 L870.7,363.06 L872.7,362.71 L874.7,362.35 L876.7,361.96 L878.7,361.56 L880.7,361.15 L882.7,360.72 L884.7,360.27 L886.7,359.81 L888.7,359.34 L890.7,358.84 L892.7,358.34 L894.7,357.82 L896.7,357.28 L898.7,356.73 L900.7,356.17 L902.7,355.59 L904.7,354.99 L906.7,354.39 L908.7,353.77 L910.7,353.13 L912.7,352.49 L914.7,351.83 L916.7,351.15 L918.7,350.47 L920.7,349.77 L922.7,349.06 L924.7,348.33 L926.7,347.60 L928.7,346.85 L930.7,346.09 L932.7,345.32 L934.7,344.54 L936.7,343.74 L938.7,342.94 L940.7,342.12 L942.7,341.29 L944.7,340.45 L946.7,339.60 L948.7,338.74 L950.7,337.87 L952.7,336.99 L954.7,336.10 L956.7,335.20 L958.7,334.29 L960.7,333.37 L962.7,332.44 L964.7,331.50 L966.7,330.55 L968.7,329.60 L970.7,328.63 L972.7,327.65 L974.7,326.67 L976.7,325.68 L978.7,324.68 L980.7,323.67 L982.7,322.65 L984.7,321.62 L986.7,320.59 L988.7,319.54 L990.7,318.49 L992.7,317.44 L994.7,316.37 L996.7,315.30 L998.7,314.22 L1000.7,313.13 L1002.7,312.03 L1004.7,310.93 L1006.7,309.82 L1008.7,308.70 L1010.7,307.58 L1012.7,306.45 L1014.7,305.31 L1016.7,304.17 L1018.7,303.02 L1020.7,301.86 L1022.7,300.70 L1024.7,299.53 L1026.7,298.35 L1028.7,297.17 L1030.7,295.98 L1032.7,294.79 L1034.7,293.59 L1036.7,292.38 L1038.7,291.17 L1040.7,289.96 L1042.7,288.73 L1044.7,287.50 L1046.7,286.27 L1048.7,285.03 L1050.7,283.79 L1052.7,282.54 L1054.7,281.28 L1056.7,280.02 L1058.7,278.75 L1060.7,277.48 L1062.7,276.21 L1064.7,274.93 L1066.7,273.64 L1068.7,272.35 L1070.7,271.05 L1072.7,269.75 L1074.7,268.45 L1076.7,267.14 L1078.7,265.82" stroke="#66e066" stroke-width="1.1" fill="none"/>
<clipPath id="cb"><rect x="756.4" y="190" width="150" height="300"/></clipPath>
<path d="M604.7,262.10 L606.7,263.61 L608.7,265.12 L610.7,266.62 L612.7,268.12 L614.7,269.62 L616.7,271.10 L618.7,272.59 L620.7,274.06 L622.7,275.53 L624.7,277.00 L626.7,278.46 L628.7,279.91 L630.7,281.36 L632.7,282.80 L634.7,284.23 L636.7,285.66 L638.7,287.08 L640.7,288.49 L642.7,289.89 L644.7,291.29 L646.7,292.68 L648.7,294.07 L650.7,295.44 L652.7,296.81 L654.7,298.16 L656.7,299.51 L658.7,300.86 L660.7,302.19 L662.7,303.51 L664.7,304.83 L666.7,306.13 L668.7,307.43 L670.7,308.71 L672.7,309.99 L674.7,311.25 L676.7,312.51 L678.7,313.75 L680.7,314.98 L682.7,316.21 L684.7,317.42 L686.7,318.62 L688.7,319.81 L690.7,320.98 L692.7,322.15 L694.7,323.30 L696.7,324.44 L698.7,325.57 L700.7,326.68 L702.7,327.79 L704.7,328.87 L706.7,329.95 L708.7,331.01 L710.7,332.06 L712.7,333.09 L714.7,334.15 L716.7,335.20 L718.7,336.23 L720.7,337.25 L722.7,338.26 L724.7,339.25 L726.7,340.22 L728.7,341.18 L730.7,342.12 L732.7,343.05 L734.7,343.96 L736.7,344.86 L738.7,345.73 L740.7,346.59 L742.7,347.44 L744.7,348.27 L746.7,349.08 L748.7,349.87 L750.7,350.65 L752.7,351.41 L754.7,352.15 L756.7,352.87 L758.7,353.58 L760.7,354.26 L762.7,354.93 L764.7,355.59 L766.7,356.22 L768.7,356.83 L770.7,357.43 L772.7,358.01 L774.7,358.56 L776.7,359.10 L778.7,359.62 L780.7,360.13 L782.7,360.61 L784.7,361.07 L786.7,361.52 L788.7,361.94 L790.7,362.35 L792.7,362.74 L794.7,363.10 L796.7,363.45 L798.7,363.78 L800.7,364.09 L802.7,364.38 L804.7,364.65 L806.7,364.91 L808.7,365.14 L810.7,365.35 L812.7,365.54 L814.7,365.72 L816.7,365.88 L818.7,366.01 L820.7,366.13 L822.7,366.23 L824.7,366.31 L826.7,366.37 L828.7,366.41 L830.7,366.43 L832.7,366.43 L834.7,366.42 L836.7,366.38 L838.7,366.33 L840.7,366.26 L842.7,366.17 L844.7,366.06 L846.7,365.94 L848.7,365.80 L850.7,365.63 L852.7,365.45 L854.7,365.26 L856.7,365.04 L858.7,364.81 L860.7,364.56 L862.7,364.30 L864.7,364.01 L866.7,363.71 L868.7,363.40 L870.7,363.06 L872.7,362.71 L874.7,362.35 L876.7,361.96 L878.7,361.56 L880.7,361.15 L882.7,360.72 L884.7,360.27 L886.7,359.81 L888.7,359.34 L890.7,358.84 L892.7,358.34 L894.7,357.82 L896.7,357.28 L898.7,356.73 L900.7,356.17 L902.7,355.59 L904.7,354.99 L906.7,354.39 L908.7,353.77 L910.7,353.13 L912.7,352.49 L914.7,351.83 L916.7,351.15 L918.7,350.47 L920.7,349.77 L922.7,349.06 L924.7,348.33 L926.7,347.60 L928.7,346.85 L930.7,346.09 L932.7,345.32 L934.7,344.54 L936.7,343.74 L938.7,342.94 L940.7,342.12 L942.7,341.29 L944.7,340.45 L946.7,339.60 L948.7,338.74 L950.7,337.87 L952.7,336.99 L954.7,336.10 L956.7,335.20 L958.7,334.29 L960.7,333.37 L962.7,332.44 L964.7,331.50 L966.7,330.55 L968.7,329.60 L970.7,328.63 L972.7,327.65 L974.7,326.67 L976.7,325.68 L978.7,324.68 L980.7,323.67 L982.7,322.65 L984.7,321.62 L986.7,320.59 L988.7,319.54 L990.7,318.49 L992.7,317.44 L994.7,316.37 L996.7,315.30 L998.7,314.22 L1000.7,313.13 L1002.7,312.03 L1004.7,310.93 L1006.7,309.82 L1008.7,308.70 L1010.7,307.58 L1012.7,306.45 L1014.7,305.31 L1016.7,304.17 L1018.7,303.02 L1020.7,301.86 L1022.7,300.70 L1024.7,299.53 L1026.7,298.35 L1028.7,297.17 L1030.7,295.98 L1032.7,294.79 L1034.7,293.59 L1036.7,292.38 L1038.7,291.17 L1040.7,289.96 L1042.7,288.73 L1044.7,287.50 L1046.7,286.27 L1048.7,285.03 L1050.7,283.79 L1052.7,282.54 L1054.7,281.28 L1056.7,280.02 L1058.7,278.75 L1060.7,277.48 L1062.7,276.21 L1064.7,274.93 L1066.7,273.64 L1068.7,272.35 L1070.7,271.05 L1072.7,269.75 L1074.7,268.45 L1076.7,267.14 L1078.7,265.82" stroke="#5a8ee0" stroke-width="1.1" fill="none" clip-path="url(#cb)"/>
<path d="M812.6,361.6 Q834,363.5 855.3,361.2 L855.3,368.2 Q834,370 812.6,368.4Z" fill="#c0a090" fill-opacity="0.85"/>
<line x1="814" y1="365.2" x2="846" y2="364.8" stroke="#7a4a60" stroke-width="0.8"/>
<circle cx="846.7" cy="365.6" r="2.8" fill="#ff0000" stroke="#301010" stroke-width="0.9"/>
</svg>
<div class="t" style="left:540px;top:195.2px;width:58.9px;text-align:right;color:#333;font-size:8.7px">206%</div>
<div class="t" style="left:540px;top:216.1px;width:58.9px;text-align:right;color:#333;font-size:8.7px">180%</div>
<div class="t" style="left:540px;top:236.9px;width:58.9px;text-align:right;color:#333;font-size:8.7px">154%</div>
<div class="t" style="left:540px;top:257.8px;width:58.9px;text-align:right;color:#333;font-size:8.7px">128%</div>
<div class="t" style="left:540px;top:278.6px;width:58.9px;text-align:right;color:#333;font-size:8.7px">103%</div>
<div class="t" style="left:540px;top:299.4px;width:58.9px;text-align:right;color:#333;font-size:8.7px">77%</div>
<div class="t" style="left:540px;top:320.3px;width:58.9px;text-align:right;color:#333;font-size:8.7px">51%</div>
<div class="t" style="left:540px;top:341.1px;width:58.9px;text-align:right;color:#333;font-size:8.7px">26%</div>
<div class="a" style="left:563.3px;top:359.4px;width:37.5px;height:11.2px;background:#d40000"></div>
<div class="t" style="left:560px;top:361.5px;width:39.5px;text-align:right;color:#fff;font-size:8.7px">0%</div>
<div class="t" style="left:540px;top:382.9px;width:58.9px;text-align:right;color:#333;font-size:8.7px">-26%</div>
<div class="t" style="left:540px;top:403.7px;width:58.9px;text-align:right;color:#333;font-size:8.7px">-51%</div>
<div class="t" style="left:540px;top:424.6px;width:58.9px;text-align:right;color:#333;font-size:8.7px">-77%</div>
<div class="t" style="left:540px;top:445.4px;width:58.9px;text-align:right;color:#333;font-size:8.7px">-103%</div>
<div class="t" style="left:540px;top:466.2px;width:58.9px;text-align:right;color:#333;font-size:8.7px">-128%</div>
<div class="t" style="left:621.6px;top:187px;width:60px;text-align:center;color:#333;font-size:8.7px">-10.9%</div>
<div class="t" style="left:681px;top:187px;width:60px;text-align:center;color:#333;font-size:8.7px">-7.6%</div>
<div class="t" style="left:740.5px;top:187px;width:60px;text-align:center;color:#333;font-size:8.7px">-4.3%</div>
<div class="t" style="left:858.6px;top:187px;width:60px;text-align:center;color:#333;font-size:8.7px">2.3%</div>
<div class="t" style="left:917.6px;top:187px;width:60px;text-align:center;color:#333;font-size:8.7px">5.6%</div>
<div class="t" style="left:976.8px;top:187px;width:60px;text-align:center;color:#333;font-size:8.7px">8.9%</div>
<div class="t" style="left:1035.6px;top:187px;width:60px;text-align:center;color:#333;font-size:8.7px">12.2%</div>
<div class="t" style="left:818.3px;top:187px;color:#333;font-size:8.7px">-1.0</div>
<div class="a" style="left:834.2px;top:183.6px;width:25.5px;height:10.3px;border:1px solid #55606e;background:#fff"></div>
<div class="t" style="left:836px;top:184.3px;color:#333;font-size:8.7px">0.0%</div>
<div class="t" style="left:633.0px;top:474.5px;width:40px;text-align:center;color:#333;font-size:8.7px">135</div>
<div class="t" style="left:691.9px;top:474.5px;width:40px;text-align:center;color:#333;font-size:8.7px">140</div>
<div class="t" style="left:750.8px;top:474.5px;width:40px;text-align:center;color:#333;font-size:8.7px">145</div>
<div class="t" style="left:868.6px;top:474.5px;width:40px;text-align:center;color:#333;font-size:8.7px">155</div>
<div class="t" style="left:927.5px;top:474.5px;width:40px;text-align:center;color:#333;font-size:8.7px">160</div>
<div class="t" style="left:986.4px;top:474.5px;width:40px;text-align:center;color:#333;font-size:8.7px">165</div>
<div class="t" style="left:1045.3px;top:474.5px;width:40px;text-align:center;color:#333;font-size:8.7px">170</div>
<div class="t" style="left:721px;top:206px;width:40px;text-align:center;color:#c8d8e0;font-size:8.7px;transform:rotate(-90deg)">142.07</div>
<div class="t" style="left:777.5px;top:209px;width:40px;text-align:center;color:#9ab8dc;font-size:8.7px;transform:rotate(-90deg)">146.77</div>
<div class="t" style="left:878.7px;top:209px;width:40px;text-align:center;color:#9ab8dc;font-size:8.7px;transform:rotate(-90deg)">156.17</div>
<div class="t" style="left:934px;top:209px;width:40px;text-align:center;color:#5a8cc4;font-size:8.7px;transform:rotate(-90deg)">160.87</div>
<div class="t" style="left:688.8px;top:449.5px;width:40px;text-align:center;color:#8a3aa8;font-size:8.7px;transform:rotate(-90deg)">140.17</div>
<div class="t" style="left:984.8px;top:449.5px;width:40px;text-align:center;color:#8a3aa8;font-size:8.7px;transform:rotate(-90deg)">165.22</div>
<div class="t" style="left:646.4px;top:454px;color:#7a3aa8;font-size:9px">20.4%</div>
<div class="t" style="left:849.3px;top:454px;color:#6a28b0;font-size:9px">63.8%</div>
<div class="t" style="left:1064px;top:454px;color:#a048c0;font-size:9px">15.8</div>
<div class="a" style="left:608.6px;top:203px;width:143.5px;height:46.5px;background:rgba(226,232,242,0.82);border:1px solid #a9b3c3;border-radius:4px"></div>
<div class="a" style="left:615.5px;top:209.5px;width:2.5px;height:10px;background:#e02a3a"></div>
<div class="a" style="left:615.5px;top:221.5px;width:2.5px;height:10px;background:#8aa0f0"></div>
<div class="a" style="left:615.5px;top:232.5px;width:2.5px;height:10px;background:#8aa0f0"></div>
<div class="t" style="left:618.5px;top:210.5px;color:#555;font-size:8.9px">-1.40 Realized PnL</div>
<div class="t" style="left:618.5px;top:222.5px;color:#555;font-size:8.9px">+1 <span style="color:#5060e8">02may. 157.5 Call &#916;</span></div>
<div class="t" style="left:618.5px;top:233.5px;color:#555;font-size:8.9px">+1 <span style="color:#5060e8">02may. 148 Put &#916;</span></div>
<div class="t" style="left:724px;top:222.5px;color:#5060e8;font-size:8.9px">41.49</div>
<div class="t" style="left:713px;top:233.5px;color:#5060e8;font-size:8.9px">-33.34</div>
<div class="a" style="left:1036.8px;top:203.4px;width:60px;height:35.6px;background:rgba(232,236,244,0.9);border:1px solid #a9b3c3;border-radius:4px"></div>
<div class="t" style="left:1045px;top:208px;color:#333;font-weight:bold;font-size:9px">Commen</div>
<div class="t" style="left:1045px;top:226px;color:#666;font-size:9px">Trade Oc</div>
<div class="a" style="left:608.9px;top:419.1px;width:86.6px;height:46.6px;background:rgba(226,232,242,0.85);border:1px solid #a9b3c3;border-radius:4px"></div>
<div class="t" style="left:615.9px;top:427px;color:#7c7ce0;font-size:8.7px">02/05/2025 (0)</div>
<div class="t" style="left:615.9px;top:438.5px;color:#f27a7a;font-size:8.7px">28/04/2025 (4) T+4</div>
<div class="t" style="left:615.9px;top:450px;color:#a8c0f0;font-size:8.7px">24/04/2025 (8) T+0</div>
<div class="t" style="left:646.4px;top:454px;color:#7a3aa8;font-size:9px">20.4%</div>
<div class="a" style="left:561px;top:488.2px;width:530px;height:157.5px;background:#e8eef7;border:1px solid #8f9cae;border-radius:5px"></div>
<div class="t" style="left:560px;top:508.09999999999997px;width:46px;text-align:center;color:#5a6068;font-size:9px">PnL</div>
<svg style="left:0;top:0" width="1080" height="675"><rect x="605.1" y="506.85" width="77.5" height="4.65" fill="#5a78f2" stroke="#5a5f68" stroke-width="0.75"/><rect x="682.6" y="509.33" width="59.4" height="2.17" fill="#5a78f2" stroke="#5a5f68" stroke-width="0.75"/><rect x="742.0" y="510.97" width="59.0" height="0.53" fill="#5a78f2" stroke="#5a5f68" stroke-width="0.75"/><rect x="801.0" y="511.50" width="59.0" height="1.09" fill="#f27878" stroke="#5a5f68" stroke-width="0.75"/><rect x="860.0" y="511.06" width="59.4" height="0.44" fill="#5a78f2" stroke="#5a5f68" stroke-width="0.75"/><rect x="919.4" y="509.69" width="58.7" height="1.81" fill="#5a78f2" stroke="#5a5f68" stroke-width="0.75"/><rect x="978.1" y="507.71" width="59.9" height="3.79" fill="#5a78f2" stroke="#5a5f68" stroke-width="0.75"/><rect x="1038.0" y="505.30" width="42.0" height="6.20" fill="#5a78f2" stroke="#5a5f68" stroke-width="0.75"/><line x1="605.1" y1="511.5" x2="1080" y2="511.5" stroke="#5a5f68" stroke-width="1"/></svg>
<div class="t" style="left:560px;top:544.2px;width:46px;text-align:center;color:#5a6068;font-size:9px">Delta</div>
<svg style="left:0;top:0" width="1080" height="675"><rect x="605.1" y="547.30" width="77.5" height="8.83" fill="#f27878" stroke="#5a5f68" stroke-width="0.75"/><rect x="682.6" y="547.30" width="59.4" height="6.70" fill="#f27878" stroke="#5a5f68" stroke-width="0.75"/><rect x="742.0" y="547.30" width="59.0" height="3.60" fill="#f27878" stroke="#5a5f68" stroke-width="0.75"/><rect x="801.0" y="547.30" width="59.0" height="0.53" fill="#f27878" stroke="#5a5f68" stroke-width="0.75"/><rect x="860.0" y="544.23" width="59.4" height="3.07" fill="#5a78f2" stroke="#5a5f68" stroke-width="0.75"/><rect x="919.4" y="541.86" width="58.7" height="5.44" fill="#5a78f2" stroke="#5a5f68" stroke-width="0.75"/><rect x="978.1" y="540.24" width="59.9" height="7.06" fill="#5a78f2" stroke="#5a5f68" stroke-width="0.75"/><rect x="1038.0" y="539.13" width="42.0" height="8.17" fill="#5a78f2" stroke="#5a5f68" stroke-width="0.75"/><line x1="605.1" y1="547.3" x2="1080" y2="547.3" stroke="#5a5f68" stroke-width="1"/></svg>
<div class="t" style="left:560px;top:571.9000000000001px;width:46px;text-align:center;color:#5a6068;font-size:9px">Gamma</div>
<svg style="left:0;top:0" width="1080" height="675"><rect x="605.1" y="570.72" width="77.5" height="4.08" fill="#5a78f2" stroke="#5a5f68" stroke-width="0.75"/><rect x="682.6" y="568.05" width="59.4" height="6.74" fill="#5a78f2" stroke="#5a5f68" stroke-width="0.75"/><rect x="742.0" y="566.08" width="59.0" height="8.72" fill="#5a78f2" stroke="#5a5f68" stroke-width="0.75"/><rect x="801.0" y="566.05" width="59.0" height="8.75" fill="#5a78f2" stroke="#5a5f68" stroke-width="0.75"/><rect x="860.0" y="567.73" width="59.4" height="7.07" fill="#5a78f2" stroke="#5a5f68" stroke-width="0.75"/><rect x="919.4" y="569.83" width="58.7" height="4.97" fill="#5a78f2" stroke="#5a5f68" stroke-width="0.75"/><rect x="978.1" y="571.45" width="59.9" height="3.35" fill="#5a78f2" stroke="#5a5f68" stroke-width="0.75"/><rect x="1038.0" y="572.44" width="42.0" height="2.36" fill="#5a78f2" stroke="#5a5f68" stroke-width="0.75"/><line x1="605.1" y1="574.8" x2="1080" y2="574.8" stroke="#5a5f68" stroke-width="1"/></svg>
<div class="t" style="left:560px;top:599.2px;width:46px;text-align:center;color:#5a6068;font-size:9px">Theta</div>
<svg style="left:0;top:0" width="1080" height="675"><rect x="605.1" y="602.20" width="77.5" height="3.74" fill="#f27878" stroke="#5a5f68" stroke-width="0.75"/><rect x="682.6" y="602.20" width="59.4" height="5.70" fill="#f27878" stroke="#5a5f68" stroke-width="0.75"/><rect x="742.0" y="602.20" width="59.0" height="7.50" fill="#f27878" stroke="#5a5f68" stroke-width="0.75"/><rect x="801.0" y="602.20" width="59.0" height="8.41" fill="#f27878" stroke="#5a5f68" stroke-width="0.75"/><rect x="860.0" y="602.20" width="59.4" height="8.31" fill="#f27878" stroke="#5a5f68" stroke-width="0.75"/><rect x="919.4" y="602.20" width="58.7" height="7.61" fill="#f27878" stroke="#5a5f68" stroke-width="0.75"/><rect x="978.1" y="602.20" width="59.9" height="6.76" fill="#f27878" stroke="#5a5f68" stroke-width="0.75"/><rect x="1038.0" y="602.20" width="42.0" height="5.94" fill="#f27878" stroke="#5a5f68" stroke-width="0.75"/><line x1="605.1" y1="602.2" x2="1080" y2="602.2" stroke="#5a5f68" stroke-width="1"/></svg>
<div class="t" style="left:560px;top:626.2px;width:46px;text-align:center;color:#5a6068;font-size:9px">Vega</div>
<svg style="left:0;top:0" width="1080" height="675"><rect x="605.1" y="625.87" width="77.5" height="3.93" fill="#5a78f2" stroke="#5a5f68" stroke-width="0.75"/><rect x="682.6" y="623.41" width="59.4" height="6.39" fill="#5a78f2" stroke="#5a5f68" stroke-width="0.75"/><rect x="742.0" y="621.22" width="59.0" height="8.58" fill="#5a78f2" stroke="#5a5f68" stroke-width="0.75"/><rect x="801.0" y="620.43" width="59.0" height="9.37" fill="#5a78f2" stroke="#5a5f68" stroke-width="0.75"/><rect x="860.0" y="621.16" width="59.4" height="8.64" fill="#5a78f2" stroke="#5a5f68" stroke-width="0.75"/><rect x="919.4" y="620.45" width="58.7" height="9.35" fill="#5a78f2" stroke="#5a5f68" stroke-width="0.75"/><rect x="978.1" y="621.00" width="59.9" height="8.80" fill="#5a78f2" stroke="#5a5f68" stroke-width="0.75"/><rect x="1038.0" y="621.55" width="42.0" height="8.25" fill="#5a78f2" stroke="#5a5f68" stroke-width="0.75"/><line x1="605.1" y1="629.8" x2="1080" y2="629.8" stroke="#5a5f68" stroke-width="1"/></svg>
<div class="t" style="left:627.4px;top:512.4px;width:50px;text-align:center;color:#6a78ee;font-size:8.9px;">659</div>
<div class="t" style="left:627.4px;top:520.7px;width:50px;text-align:center;color:#6a78ee;font-size:8.9px;">85%</div>
<div class="t" style="left:687.2px;top:512.4px;width:50px;text-align:center;color:#6a78ee;font-size:8.9px;">308</div>
<div class="t" style="left:687.2px;top:520.7px;width:50px;text-align:center;color:#6a78ee;font-size:8.9px;">40%</div>
<div class="t" style="left:746.0px;top:512.4px;width:50px;text-align:center;color:#6a78ee;font-size:8.9px;">75</div>
<div class="t" style="left:746.0px;top:520.7px;width:50px;text-align:center;color:#6a78ee;font-size:8.9px;">10%</div>
<div class="t" style="left:864.6px;top:512.4px;width:50px;text-align:center;color:#6a78ee;font-size:8.9px;">62</div>
<div class="t" style="left:864.6px;top:520.7px;width:50px;text-align:center;color:#6a78ee;font-size:8.9px;">8%</div>
<div class="t" style="left:923.5px;top:512.4px;width:50px;text-align:center;color:#6a78ee;font-size:8.9px;">256</div>
<div class="t" style="left:923.5px;top:520.7px;width:50px;text-align:center;color:#6a78ee;font-size:8.9px;">33%</div>
<div class="t" style="left:982.8px;top:512.4px;width:50px;text-align:center;color:#6a78ee;font-size:8.9px;">537</div>
<div class="t" style="left:982.8px;top:520.7px;width:50px;text-align:center;color:#6a78ee;font-size:8.9px;">69%</div>
<div class="t" style="left:1041.7px;top:512.4px;width:50px;text-align:center;color:#6a78ee;font-size:8.9px;">878</div>
<div class="t" style="left:1041.7px;top:520.7px;width:50px;text-align:center;color:#6a78ee;font-size:8.9px;">113%</div>
<div class="t" style="left:627.4px;top:540.0px;width:50px;text-align:center;color:#f27474;font-size:8.9px;">-78.82</div>
<div class="t" style="left:627.4px;top:576.1px;width:50px;text-align:center;color:#6a78ee;font-size:8.9px;">2.87</div>
<div class="t" style="left:627.4px;top:594.1px;width:50px;text-align:center;color:#f27474;font-size:8.9px;">-31.14</div>
<div class="t" style="left:687.2px;top:540.0px;width:50px;text-align:center;color:#f27474;font-size:8.9px;">-59.81</div>
<div class="t" style="left:687.2px;top:576.1px;width:50px;text-align:center;color:#6a78ee;font-size:8.9px;">4.75</div>
<div class="t" style="left:687.2px;top:594.1px;width:50px;text-align:center;color:#f27474;font-size:8.9px;">-47.53</div>
<div class="t" style="left:746.0px;top:540.0px;width:50px;text-align:center;color:#f27474;font-size:8.9px;">-32.12</div>
<div class="t" style="left:746.0px;top:576.1px;width:50px;text-align:center;color:#6a78ee;font-size:8.9px;">6.14</div>
<div class="t" style="left:746.0px;top:594.1px;width:50px;text-align:center;color:#f27474;font-size:8.9px;">-62.48</div>
<div class="t" style="left:864.6px;top:548.2px;width:50px;text-align:center;color:#6a78ee;font-size:8.9px;">27.44</div>
<div class="t" style="left:864.6px;top:576.1px;width:50px;text-align:center;color:#6a78ee;font-size:8.9px;">4.98</div>
<div class="t" style="left:864.6px;top:594.1px;width:50px;text-align:center;color:#f27474;font-size:8.9px;">-69.24</div>
<div class="t" style="left:923.5px;top:548.2px;width:50px;text-align:center;color:#6a78ee;font-size:8.9px;">48.58</div>
<div class="t" style="left:923.5px;top:576.1px;width:50px;text-align:center;color:#6a78ee;font-size:8.9px;">3.50</div>
<div class="t" style="left:923.5px;top:594.1px;width:50px;text-align:center;color:#f27474;font-size:8.9px;">-63.43</div>
<div class="t" style="left:982.8px;top:548.2px;width:50px;text-align:center;color:#6a78ee;font-size:8.9px;">63.02</div>
<div class="t" style="left:982.8px;top:576.1px;width:50px;text-align:center;color:#6a78ee;font-size:8.9px;">2.36</div>
<div class="t" style="left:982.8px;top:594.1px;width:50px;text-align:center;color:#f27474;font-size:8.9px;">-56.36</div>
<div class="t" style="left:1041.7px;top:548.2px;width:50px;text-align:center;color:#6a78ee;font-size:8.9px;">72.92</div>
<div class="t" style="left:1041.7px;top:576.1px;width:50px;text-align:center;color:#6a78ee;font-size:8.9px;">1.66</div>
<div class="t" style="left:1041.7px;top:594.1px;width:50px;text-align:center;color:#f27474;font-size:8.9px;">-49.47</div>
<div class="t" style="left:627.4px;top:630.9px;width:50px;text-align:center;color:#6a78ee;font-size:8.9px;">7.15</div>
<div class="t" style="left:687.2px;top:630.9px;width:50px;text-align:center;color:#6a78ee;font-size:8.9px;">11.62</div>
<div class="t" style="left:746.0px;top:630.9px;width:50px;text-align:center;color:#6a78ee;font-size:8.9px;">15.60</div>
<div class="t" style="left:864.6px;top:630.9px;width:50px;text-align:center;color:#6a78ee;font-size:8.9px;">15.71</div>
<div class="t" style="left:804.6px;top:495.1px;width:50px;text-align:center;color:rgba(242,116,116,0.35);font-size:8.9px;">-155</div>
<div class="t" style="left:804.6px;top:503.1px;width:50px;text-align:center;color:rgba(242,116,116,0.35);font-size:8.9px;">-7</div>
<div class="t" style="left:804.6px;top:539.0px;width:50px;text-align:center;color:rgba(242,116,116,0.35);font-size:8.9px;">-4.72</div>
<div class="t" style="left:804.6px;top:575.1px;width:50px;text-align:center;color:rgba(106,120,238,0.35);font-size:8.9px;">6.16</div>
<div class="t" style="left:804.6px;top:593.6px;width:50px;text-align:center;color:rgba(242,116,116,0.35);font-size:8.9px;">-70.11</div>
<div class="t" style="left:804.6px;top:629.7px;width:50px;text-align:center;color:rgba(106,120,238,0.35);font-size:8.9px;">17.04</div>
<div class="a" style="left:912.8px;top:610.8px;width:170px;height:34px;background:#e8eef6;border-top:1px solid #b0bac8"></div>
<div class="a" style="left:912.8px;top:610.8px;width:4.7px;height:34px;background:#1a78d8"></div>
<div class="t" style="left:925.8px;top:619.8px;color:#222;font-weight:bold;font-size:9.4px">16:05:19</div>
<div class="t" style="left:974.4px;top:619.8px;color:#2a48d0;font-weight:bold;font-size:9.4px;text-decoration:underline">Noticias</div>
<div class="a" style="left:825.6px;top:473.3px;width:42.2px;height:171px;background:rgba(226,233,245,0.78);border:1px solid #8592a4;border-radius:5px"></div>
<div class="t" style="left:821.7px;top:475.4px;width:50px;text-align:center;color:#222;font-size:9.2px;">151.47</div>
<div class="t" style="left:821.7px;top:504.1px;width:50px;text-align:center;color:#e8202a;font-size:9.2px;">-1</div>
<div class="t" style="left:821.7px;top:516.5px;width:50px;text-align:center;color:#e8202a;font-size:9.2px;">-0.2%</div>
<div class="t" style="left:821.7px;top:544.2px;width:50px;text-align:center;color:#2a48e0;font-size:9.2px;">8.14</div>
<div class="t" style="left:821.7px;top:571.4px;width:50px;text-align:center;color:#2a48e0;font-size:9.2px;">5.90</div>
<div class="t" style="left:821.7px;top:598.6px;width:50px;text-align:center;color:#e8202a;font-size:9.2px;">-70.63</div>
<div class="t" style="left:821.7px;top:626.1px;width:50px;text-align:center;color:#2a48e0;font-size:9.2px;">16.89</div>
<div class="a" style="left:557px;top:647.5px;width:523px;height:23.6px;background:#283858"></div>
<div class="t" style="left:1037px;top:654.5px;color:#e8ecf4;font-size:10px">100%</div>
<div class="t" style="left:1070px;top:653px;color:#c8d0dc;font-size:10px">&#8211;</div>
<div class="a" style="left:1076.7px;top:647.5px;width:3.3px;height:23.6px;background:#1a78d8"></div>
<div class="a" style="left:0px;top:671px;width:1080px;height:2px;background:#c5cbd6"></div>
<div class="a" style="left:0px;top:673px;width:1080px;height:2px;background:#394356"></div>
</body></html>
